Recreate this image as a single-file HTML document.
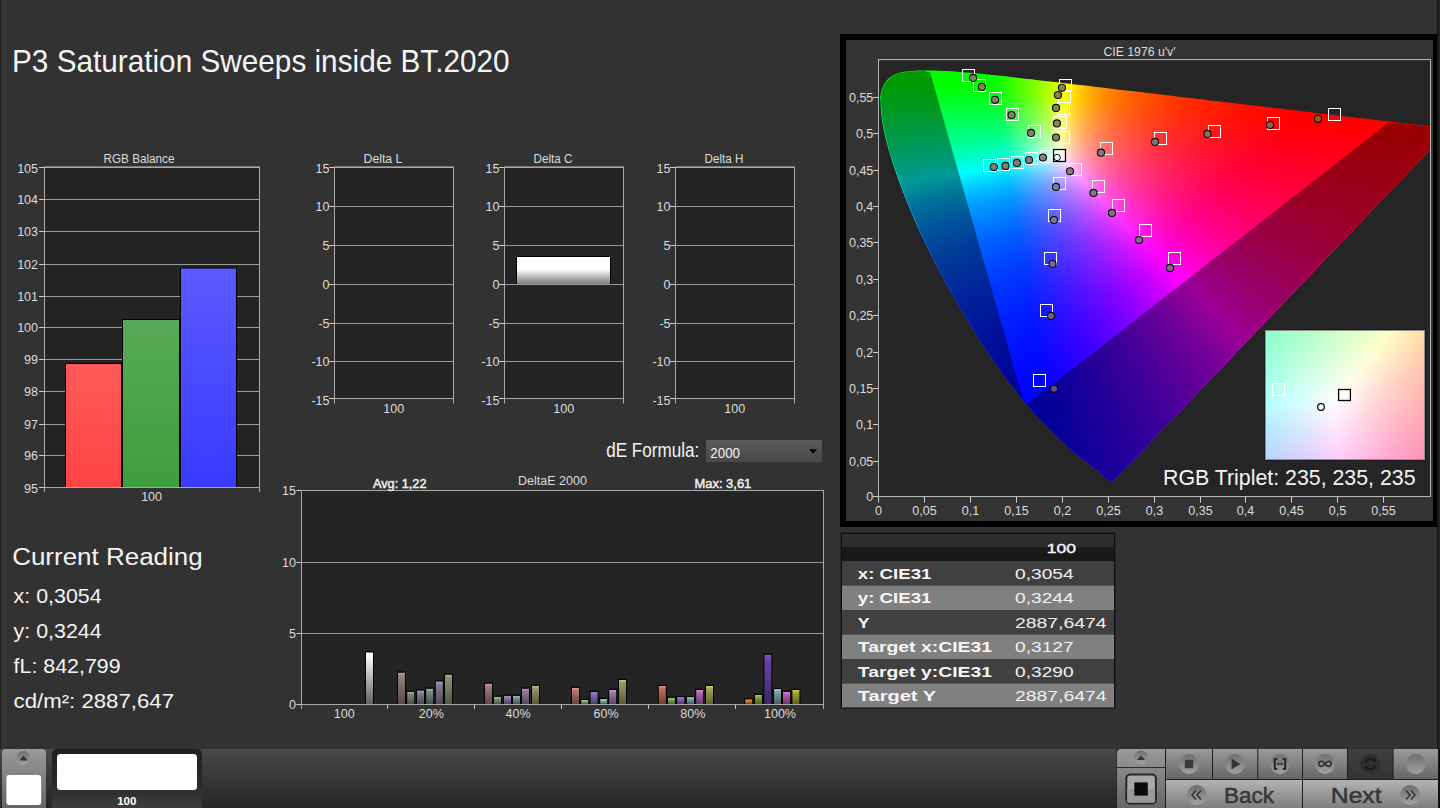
<!DOCTYPE html><html><head><meta charset="utf-8"><title>P3 Saturation Sweeps inside BT.2020</title><style>
html,body{margin:0;padding:0}
body{width:1440px;height:808px;background:#323232;overflow:hidden;position:relative;font-family:"Liberation Sans",sans-serif}
div{position:absolute}
#ov{position:absolute;left:0;top:0}
text{font-family:"Liberation Sans",sans-serif}
#fill{left:878px;top:59px;width:553px;height:437px;overflow:hidden}
#fill i,#ins i{display:block}
#ins{left:1265px;top:330px;width:158px;height:128px;border:1px solid #8c9090;overflow:hidden;box-shadow:0 0 0 1px #1c1c1c}
</style></head><body>
<div style="left:0;top:0;width:7px;height:749px;background:linear-gradient(90deg,#1e1e1e 0,#1e1e1e 1px,#363636 1px,#353535 6px,#2f2f2f 7px)"></div>
<div style="left:0;top:749px;width:1440px;height:59px;background:linear-gradient(#494949,#3a3a3a 40%,#262626)"></div>
<div style="left:840px;top:34px;width:587px;height:481px;border:6px solid #000;background:#343434"></div>
<div style="left:1437px;top:0;width:3px;height:749px;background:linear-gradient(90deg,#101010,#282828)"></div>
<div style="left:878px;top:59px;width:553px;height:437px;background:linear-gradient(#303030 0,#2e2e2e 2px,#252525 3.5px)"></div>
<div id="fill" style="clip-path:polygon(233.9px 423.7px,231.9px 422.2px,230.2px 420.8px,228.3px 419.3px,226.1px 417.5px,225px 416.5px,223.8px 415.5px,222.5px 414.4px,221.2px 413.3px,219.8px 412.1px,218.4px 410.9px,216.8px 409.6px,215.2px 408.3px,213.5px 406.9px,211.6px 405.4px,209.6px 403.8px,207.4px 402.2px,205.2px 400.4px,202.9px 398.6px,200.5px 396.8px,198px 394.9px,195.5px 392.8px,192.8px 390.7px,190.3px 388.5px,187.8px 386.1px,185.1px 383.6px,182.3px 381px,179.4px 378.2px,176.5px 375.2px,173.4px 372.1px,170.1px 368.8px,166.6px 365.3px,162.9px 361.4px,159px 357.2px,154.8px 352.5px,150.3px 347.2px,145.5px 341.5px,140.4px 335.3px,135.2px 328.7px,130px 321.8px,124.6px 314.4px,119px 306.6px,113.3px 298.4px,107.5px 289.8px,101.6px 280.8px,95.6px 271.4px,89.6px 261.6px,83.7px 251.7px,77.8px 241.5px,71.9px 231.2px,66.1px 220.8px,60.4px 210.3px,54.9px 199.7px,49.5px 189.2px,44.5px 178.7px,39.8px 168.4px,35.4px 158.4px,31.3px 148.5px,27.4px 139px,23.8px 129.7px,20.5px 120.8px,17.5px 112.3px,14.8px 104.2px,12.4px 96.6px,10.3px 89.5px,8.5px 82.8px,6.9px 76.5px,5.6px 70.6px,4.6px 65.1px,3.8px 60px,3.2px 55.3px,2.8px 51px,2.6px 47px,2.7px 43.2px,2px 39.7px,2.4px 36.5px,3px 33.5px,3.8px 30.7px,4.8px 28.2px,5.9px 25.8px,7.1px 23.7px,8.5px 21.8px,10.1px 20.1px,11.8px 18.6px,13.6px 17.3px,15.5px 16.2px,17.5px 15.2px,19.6px 14.4px,21.7px 13.7px,24px 13.2px,26.3px 12.8px,28.7px 12.4px,31.1px 12.2px,33.6px 11.9px,36.1px 11.8px,38.7px 11.7px,41.3px 11.6px,43.9px 11.5px,46.5px 11.5px,49.1px 11.5px,51.7px 11.5px,54.3px 11.5px,56.9px 11.6px,59.6px 11.7px,62.3px 11.8px,65px 11.9px,67.7px 12px,70.5px 12.1px,73.3px 12.3px,76.1px 12.5px,79px 12.7px,82px 12.9px,85px 13.2px,88px 13.4px,91.1px 13.7px,94.3px 14px,97.5px 14.3px,100.7px 14.6px,104px 14.9px,107.4px 15.2px,110.9px 15.6px,114.4px 16px,118px 16.3px,121.7px 16.7px,125.4px 17.1px,129.2px 17.6px,133.1px 18px,137.1px 18.4px,141.2px 18.9px,145.3px 19.4px,149.5px 19.9px,153.8px 20.3px,158.3px 20.9px,162.7px 21.4px,167.3px 21.9px,172px 22.4px,176.8px 23px,181.6px 23.6px,186.6px 24.2px,191.7px 24.7px,196.8px 25.4px,202.1px 26px,207.4px 26.6px,212.9px 27.3px,218.4px 27.9px,224px 28.6px,229.8px 29.3px,235.6px 30px,241.5px 30.7px,247.5px 31.4px,253.6px 32.1px,259.8px 32.8px,266px 33.6px,272.4px 34.3px,278.8px 35.1px,285.2px 35.8px,291.8px 36.6px,298.4px 37.4px,305px 38.2px,311.7px 39px,318.5px 39.8px,325.2px 40.6px,332px 41.4px,338.7px 42.2px,345.3px 42.9px,351.8px 43.7px,358.3px 44.5px,364.8px 45.3px,371.2px 46px,377.7px 46.8px,384.1px 47.5px,390.4px 48.3px,396.7px 49px,402.9px 49.8px,408.9px 50.5px,414.7px 51.2px,420.4px 51.8px,426px 52.5px,431.5px 53.1px,436.8px 53.8px,442px 54.4px,447.1px 55px,452px 55.6px,456.8px 56.1px,461.4px 56.7px,465.9px 57.2px,470.2px 57.7px,474.4px 58.2px,478.4px 58.7px,482.3px 59.2px,486px 59.6px,489.7px 60px,493.2px 60.4px,496.5px 60.8px,499.8px 61.2px,502.9px 61.6px,505.9px 61.9px,508.9px 62.3px,511.7px 62.6px,514.5px 63px,517.3px 63.3px,519.9px 63.6px,522.5px 63.9px,525px 64.2px,527.4px 64.5px,529.7px 64.8px,531.9px 65px,534.1px 65.3px,536.1px 65.5px,538.1px 65.8px,540px 66px,541.9px 66.2px,543.6px 66.4px,545.3px 66.6px,546.8px 66.8px,549.6px 67.1px,552.2px 67.4px,554.5px 67.7px,556.6px 67.9px,558.5px 68.2px,560.2px 68.4px,562.3px 68.6px,563.9px 68.8px,565.7px 69px,567.3px 69.2px,569px 69.4px,570.7px 69.6px,572.2px 69.8px)">
<i style="height:10px"></i>
<i style="height:1px;background:linear-gradient(90deg,#0f0 44px,#0f0 54px)"></i>
<i style="height:1px;background:linear-gradient(90deg,#0f0 26px,#0f0 79px)"></i>
<i style="height:1px;background:linear-gradient(90deg,#0f0 20px,#0f0 91px)"></i>
<i style="height:1px;background:linear-gradient(90deg,#0f0 17px,#0f0 102px)"></i>
<i style="height:1px;background:linear-gradient(90deg,#0f0 14px,#0f0 112px)"></i>
<i style="height:1px;background:linear-gradient(90deg,#0f0 12px,#0f0 113px,#17ff00 122px)"></i>
<i style="height:1px;background:linear-gradient(90deg,#0f0 11px,#0f0 113px,#30ff00 131px)"></i>
<i style="height:1px;background:linear-gradient(90deg,#0f0 9px,#01ff00 114px,#4bff00 140px)"></i>
<i style="height:1px;background:linear-gradient(90deg,#0f0 8px,#01ff00 114px,#4bff00 140px,#67ff00 149px)"></i>
<i style="height:1px;background:linear-gradient(90deg,#00ff01 7px,#0f0 114px,#4aff00 140px,#85ff00 158px)"></i>
<i style="height:1px;background:linear-gradient(90deg,#00ff03 6px,#0f0 41px,#0f0 114px,#4aff00 140px,#97ff00 163px,#a2ff00 166px)"></i>
<i style="height:1px;background:linear-gradient(90deg,#00ff05 6px,#0f0 48px,#0f0 114px,#4f0 138px,#90ff00 161px,#c4ff00 175px)"></i>
<i style="height:1px;background:linear-gradient(90deg,#00ff07 5px,#0f0 57px,#0f0 114px,#3dff00 136px,#89ff00 159px,#d4ff00 179px,#e9ff00 184px)"></i>
<i style="height:1px;background:linear-gradient(90deg,#00ff09 4px,#0f0 67px,#01ff00 115px,#49ff00 140px,#93ff00 162px,#e1ff00 182px,#ff0 189px,#fff200 192px)"></i>
<i style="height:1px;background:linear-gradient(90deg,#00ff0b 4px,#0f0 77px,#01ff00 115px,#49ff00 140px,#93ff00 162px,#e1ff00 182px,#ff0 189px,#ffd400 200px,#ffd100 201px)"></i>
<i style="height:1px;background:linear-gradient(90deg,#00ff0d 3px,#0f0 87px,#01ff00 115px,#49ff00 140px,#93ff00 162px,#e1ff00 182px,#fffe00 189px,#ffd400 200px,#ffb900 209px)"></i>
<i style="height:1px;background:linear-gradient(90deg,#00ff0f 3px,#0f0 97px,#0f0 115px,#49ff00 140px,#93ff00 162px,#e2ff00 182px,#fffe00 189px,#ffd400 200px,#ffae00 213px,#ffa400 217px)"></i>
<i style="height:1px;background:linear-gradient(90deg,#0f1 2px,#0f0 107px,#0f0 115px,#45ff00 139px,#90ff00 161px,#deff00 181px,#fffd00 189px,#ffd300 200px,#ffad00 213px,#ff9000 226px)"></i>
<i style="height:1px;background:linear-gradient(90deg,#00ff13 2px,#0f0 115px,#3fff00 137px,#8f0 159px,#d6ff00 179px,#fdff00 188px,#fff900 190px,#ffcf00 201px,#ffa800 215px,#ff8500 232px,#ff8100 234px)"></i>
<i style="height:1px;background:linear-gradient(90deg,#00ff15 1px,#00ff01 115px,#35ff00 134px,#81ff00 157px,#ceff00 177px,#fdff00 188px,#fff400 191px,#fc0 202px,#ffa500 216px,#ff8100 234px,#ff7300 243px)"></i>
<i style="height:1px;background:linear-gradient(90deg,#00ff16 1px,#01ff03 116px,#4bff00 141px,#97ff00 163px,#e7ff00 183px,#fdff00 188px,#ffe000 196px,#ffb900 208px,#ff9500 223px,#ff7200 243px,#ff6700 251px)"></i>
<i style="height:1px;background:linear-gradient(90deg,#00ff18 1px,#01ff06 116px,#4bff00 141px,#97ff00 163px,#e3ff00 182px,#feff00 188px,#ffce00 201px,#ffa700 215px,#ff8300 232px,#ff6300 254px,#ff5c00 260px)"></i>
<i style="height:1px;background:linear-gradient(90deg,#00ff1a 1px,#00ff08 116px,#4bff02 141px,#97ff00 163px,#e4ff00 182px,#feff00 188px,#ffd100 200px,#ffab00 213px,#ff8700 230px,#ff6500 252px,#ff5300 268px)"></i>
<i style="height:1px;background:linear-gradient(90deg,#00ff1c 0px,#00ff0b 116px,#47ff05 140px,#93ff00 162px,#e0ff00 181px,#ff0 188px,#ffd400 199px,#ffad00 212px,#ff8a00 228px,#ff6900 249px,#ff4a00 277px)"></i>
<i style="height:1px;background:linear-gradient(90deg,#00ff1e 0px,#00ff0d 116px,#41ff08 138px,#8cff03 160px,#dbff00 180px,#ff0 188px,#ffd700 198px,#ffaf00 211px,#ff8b00 227px,#ff6900 248px,#ff4b00 275px,#ff4200 285px)"></i>
<i style="height:1px;background:linear-gradient(90deg,#00ff20 0px,#00ff10 116px,#3aff0c 136px,#84ff06 158px,#d3ff01 178px,#ff0 188px,#ffd600 198px,#ffaf00 211px,#ff8b00 227px,#ff6900 248px,#ff4b00 275px,#ff3c00 293px)"></i>
<i style="height:1px;background:linear-gradient(90deg,#0f2 0px,#01ff12 117px,#4aff0d 141px,#93ff08 162px,#e0ff03 181px,#fffe01 188px,#ffd600 198px,#ffae00 211px,#ff8b00 227px,#ff6900 248px,#ff4a00 275px,#ff3500 302px)"></i>
<i style="height:1px;background:linear-gradient(90deg,#00ff24 0px,#01ff15 117px,#49ff10 141px,#93ff0b 162px,#e1ff06 181px,#fffe04 188px,#ffd601 198px,#ffae00 211px,#ff8a00 227px,#ff6800 248px,#ff4a00 275px,#ff2f00 310px)"></i>
<i style="height:1px;background:linear-gradient(90deg,#00ff26 0px,#01ff17 117px,#49ff13 141px,#93ff0e 162px,#e1ff0a 181px,#fffd08 188px,#ffd504 198px,#ffae00 211px,#ff8a00 227px,#ff6800 248px,#ff4a00 275px,#ff2e00 312px,#ff2a00 319px)"></i>
<i style="height:1px;background:linear-gradient(90deg,#00ff28 0px,#00ff1a 117px,#49ff16 141px,#93ff11 162px,#e1ff0d 181px,#fcff0b 187px,#fff80a 189px,#ffd106 199px,#ffaa03 212px,#ff8700 228px,#f60 249px,#ff4700 277px,#ff2c00 315px,#ff2500 327px)"></i>
<i style="height:1px;background:linear-gradient(90deg,#00ff2a 0px,#00ff1c 117px,#42ff19 139px,#8cff15 160px,#d9ff11 179px,#fdff0f 187px,#fff40d 190px,#ffca09 201px,#ffa504 214px,#ff8100 231px,#ff6100 253px,#ff4300 282px,#ff2700 322px,#ff2000 336px)"></i>
<i style="height:1px;background:linear-gradient(90deg,#00ff2c 0px,#00ff1f 117px,#3bff1c 137px,#88ff18 159px,#d5ff14 178px,#fdff12 187px,#ffe70f 193px,#ffc00a 204px,#ff9b06 218px,#ff7801 236px,#ff5800 260px,#ff3a00 292px,#ff2000 336px,#ff1c00 344px)"></i>
<i style="height:1px;background:linear-gradient(90deg,#00ff2e 0px,#0f2 117px,#32ff1f 134px,#7dff1c 156px,#c8ff18 175px,#feff15 187px,#ffd00f 199px,#ffa90a 212px,#ff8605 228px,#ff6501 249px,#ff4600 277px,#ff2b00 315px,#ff1800 352px)"></i>
<i style="height:1px;background:linear-gradient(90deg,#00ff2f 0px,#01ff24 118px,#4bff21 142px,#97ff1d 163px,#e7ff1a 182px,#feff19 187px,#ffcf12 199px,#ffa90c 212px,#ff8607 228px,#ff6403 249px,#ff4600 277px,#ff2a00 315px,#ff1400 361px)"></i>
<i style="height:1px;background:linear-gradient(90deg,#00ff31 0px,#01ff27 118px,#4bff24 142px,#97ff20 163px,#e7ff1d 182px,#ffff1c 187px,#ffd215 198px,#ffab0f 211px,#ff870a 227px,#ff6505 248px,#ff4700 275px,#ff2c00 312px,#ff1300 364px,#f10 369px)"></i>
<i style="height:1px;background:linear-gradient(90deg,#0f3 0px,#00ff2a 118px,#47ff27 141px,#93ff24 162px,#e3ff21 181px,#ffff1f 187px,#ffd619 197px,#ffb013 209px,#ff8c0d 224px,#ff6b07 244px,#ff4c02 270px,#ff3000 305px,#ff1700 354px,#ff0e00 378px)"></i>
<i style="height:1px;background:linear-gradient(90deg,#00ff35 0px,#00ff2c 118px,#47ff2a 141px,#93ff27 162px,#e3ff24 181px,#ffff23 187px,#ffd51c 197px,#ffaf15 209px,#ff8c0f 224px,#ff6a09 244px,#ff4b04 270px,#ff2f00 305px,#ff1600 354px,#ff0b00 386px)"></i>
<i style="height:1px;background:linear-gradient(90deg,#00ff37 0px,#00ff2f 118px,#40ff2d 139px,#8cff2a 160px,#dbff28 179px,#fffe26 187px,#ffd51f 197px,#ffaf18 209px,#ff8c11 224px,#ff6a0b 244px,#ff4b05 270px,#ff2f00 305px,#ff1600 354px,#ff0800 395px)"></i>
<i style="height:1px;background:linear-gradient(90deg,#00ff39 0px,#00ff32 118px,#36ff30 136px,#80ff2e 157px,#ceff2c 176px,#fffe2a 187px,#ffd422 197px,#ffae1a 209px,#ff8b13 224px,#ff690d 244px,#ff4b07 270px,#ff2f01 305px,#ff1600 354px,#ff0500 403px)"></i>
<i style="height:1px;background:linear-gradient(90deg,#00ff3b 0px,#01ff35 119px,#4aff33 142px,#93ff31 162px,#e0ff2e 180px,#fffd2d 187px,#ffd425 197px,#ffae1d 209px,#ff8b16 224px,#ff690f 244px,#ff4a08 270px,#ff2e03 305px,#ff1500 354px,#ff0300 412px)"></i>
<i style="height:1px;background:linear-gradient(90deg,#00ff3d 0px,#01ff37 119px,#4aff36 142px,#93ff34 162px,#e0ff32 180px,#fcff31 186px,#fff830 188px,#ffd027 198px,#ffa81e 211px,#ff8417 227px,#ff630f 248px,#ff4509 275px,#ff2a03 312px,#f10 364px,#f00 420px)"></i>
<i style="height:1px;background:linear-gradient(90deg,#00ff40 0px,#00ff3a 119px,#49ff39 142px,#93ff37 162px,#e0ff35 180px,#fdff35 186px,#fff833 188px,#ffcf2a 198px,#ffaa21 210px,#ff8619 226px,#ff6512 246px,#ff470b 273px,#ff2b04 310px,#ff1200 362px,#f00 424px,#f00 429px)"></i>
<i style="height:1px;background:linear-gradient(90deg,#00ff42 0px,#00ff3d 119px,#49ff3c 142px,#93ff3a 162px,#e1ff39 180px,#fdff38 186px,#ffea33 191px,#ffc12a 202px,#ff9b20 216px,#ff7918 233px,#ff5810 256px,#ff3b0a 286px,#ff2003 328px,#ff0a00 385px,#f00 426px,#f00 437px)"></i>
<i style="height:1px;background:linear-gradient(90deg,#0f4 0px,#00ff40 119px,#42ff3f 140px,#8bff3e 160px,#d8ff3d 178px,#feff3c 186px,#ffce30 198px,#ffa927 210px,#ff851e 226px,#ff6415 246px,#ff460e 273px,#ff2a07 310px,#ff1101 362px,#f00 422px,#f00 446px)"></i>
<i style="height:1px;background:linear-gradient(90deg,#00ff46 1px,#00ff43 119px,#38ff42 137px,#83ff41 158px,#cfff40 176px,#feff40 186px,#ffd134 197px,#ffab2a 209px,#ff8821 224px,#ff6718 244px,#ff4810 270px,#ff2d09 305px,#ff1402 355px,#f00 420px,#f00 454px)"></i>
<i style="height:1px;background:linear-gradient(90deg,#00ff48 1px,#00ff46 119px,#2aff45 133px,#74ff45 154px,#c2ff44 173px,#ff4 186px,#ffd438 196px,#ffae2d 208px,#ff8a24 223px,#ff691b 242px,#ff4b12 267px,#ff2f0b 301px,#ff1604 349px,#ff0100 414px,#f00 462px)"></i>
<i style="height:1px;background:linear-gradient(90deg,#00ff4a 1px,#01ff49 120px,#48ff48 142px,#93ff48 162px,#e2ff47 180px,#ffff47 186px,#ffd43b 196px,#ffad30 208px,#ff8926 223px,#ff691d 242px,#ff4a14 267px,#ff2f0c 301px,#ff1605 349px,#f00 416px,#f00 471px)"></i>
<i style="height:1px;background:linear-gradient(90deg,#00ff4c 1px,#01ff4c 120px,#48ff4b 142px,#93ff4b 162px,#e2ff4b 180px,#ffff4b 186px,#ffd73f 195px,#ffb034 207px,#ff8b29 222px,#ff6a1f 241px,#ff4b16 266px,#ff2f0e 300px,#ff1606 348px,#f00 415px,#f00 479px)"></i>
<i style="height:1px;background:linear-gradient(90deg,#00ff4e 1px,#00ff4e 120px,#48ff4f 142px,#93ff4f 162px,#e3ff4f 180px,#fffe4f 186px,#ffd743 195px,#ffaf36 207px,#ff8b2b 222px,#ff6921 241px,#ff4b17 266px,#ff2f0f 300px,#ff1507 348px,#f00 415px,#f00 488px)"></i>
<i style="height:1px;background:linear-gradient(90deg,#00ff50 1px,#00ff51 120px,#44ff52 141px,#8fff52 161px,#deff53 179px,#fffe52 186px,#ffd646 195px,#ffaf39 207px,#ff8a2d 222px,#ff6923 241px,#ff4a19 266px,#ff2e10 300px,#ff1508 348px,#ff0001 414px,#f00 496px)"></i>
<i style="height:1px;background:linear-gradient(90deg,#00ff52 1px,#00ff54 120px,#3dff55 139px,#87ff56 159px,#d5ff56 177px,#fcff57 185px,#fffd56 186px,#ffd649 195px,#ffae3c 207px,#ff8a30 222px,#ff6825 241px,#ff4a1b 266px,#ff2e11 300px,#ff1509 348px,#ff0002 413px,#f00 505px)"></i>
<i style="height:1px;background:linear-gradient(90deg,#00ff54 1px,#00ff57 120px,#2fff58 135px,#77ff59 155px,#c3ff5a 173px,#fcff5a 185px,#fff858 187px,#ffce4a 197px,#ffa83d 209px,#ff8531 224px,#ff6425 244px,#ff461b 270px,#ff2a11 306px,#ff1109 356px,#ff0003 414px,#f00 493px,#f00 513px)"></i>
<i style="height:1px;background:linear-gradient(90deg,#00ff57 2px,#01ff5b 121px,#4aff5c 143px,#93ff5d 162px,#dfff5e 179px,#fdff5e 185px,#fff75c 187px,#ffcd4d 197px,#ffa83f 209px,#ff8533 224px,#ff6327 244px,#ff451c 270px,#ff2913 306px,#ff110a 356px,#ff0004 414px,#f00 495px,#f00 522px)"></i>
<i style="height:1px;background:linear-gradient(90deg,#00ff59 2px,#01ff5e 121px,#4aff5f 143px,#93ff60 162px,#e0ff62 179px,#fdff62 185px,#ffee5c 189px,#ffc64d 199px,#ff9f3f 212px,#ff7c32 228px,#ff5c27 249px,#ff3e1c 277px,#ff2412 315px,#ff0c09 369px,#ff0004 415px,#f00 502px,#f00 530px)"></i>
<i style="height:1px;background:linear-gradient(90deg,#00ff5b 2px,#00ff61 121px,#4aff62 143px,#93ff64 162px,#e0ff66 179px,#feff66 185px,#ffd055 196px,#ffa946 208px,#ff8638 223px,#ff652c 242px,#ff4620 268px,#ff2b16 303px,#ff120d 352px,#ff0005 411px,#f00 509px,#f00 538px)"></i>
<i style="height:1px;background:linear-gradient(90deg,#00ff5d 2px,#00ff64 121px,#46ff66 142px,#8fff68 161px,#dbff6a 178px,#feff6a 185px,#ffd058 196px,#ffa949 208px,#ff853b 223px,#ff652e 242px,#ff4622 268px,#ff2a17 303px,#ff120e 352px,#ff0006 410px,#f00 518px,#f00 547px)"></i>
<i style="height:1px;background:linear-gradient(90deg,#00ff5f 2px,#00ff67 121px,#3eff69 140px,#8bff6b 160px,#d7ff6d 177px,#feff6e 185px,#ffd35d 195px,#ffab4d 207px,#ff873e 222px,#ff6631 241px,#ff4724 266px,#ff2c19 300px,#ff130f 348px,#ff0007 409px,#f00 527px,#f00 553px)"></i>
<i style="height:1px;background:linear-gradient(90deg,#00ff62 2px,#00ff6a 121px,#33ff6c 137px,#7fff6e 157px,#ceff71 175px,#ffff73 185px,#ffd662 194px,#ffb052 205px,#ff8d43 219px,#ff6b35 237px,#ff4c28 261px,#ff301d 293px,#ff1712 338px,#ff0009 404px,#f00 533px,#f00 553px)"></i>
<i style="height:1px;background:linear-gradient(90deg,#00ff64 3px,#01ff6d 122px,#49ff70 143px,#93ff73 162px,#e1ff76 179px,#ffff76 185px,#ffd665 194px,#ffb055 205px,#ff8c45 219px,#ff6b37 237px,#ff4c2a 261px,#ff301e 293px,#ff1713 338px,#ff0009 404px,#f00 541px,#f00 553px)"></i>
<i style="height:1px;background:linear-gradient(90deg,#0f6 3px,#01ff71 122px,#48ff73 143px,#93ff76 162px,#e1ff7a 179px,#fffe7a 185px,#ffd568 194px,#ffaf58 205px,#ff8c48 219px,#ff6a39 237px,#ff4b2c 261px,#ff301f 293px,#ff1614 338px,#ff000a 403px,#f00 548px,#f00 553px)"></i>
<i style="height:1px;background:linear-gradient(90deg,#00ff68 3px,#00ff74 122px,#48ff77 143px,#93ff7a 162px,#e2ff7e 179px,#fffe7e 185px,#ffd56c 194px,#ffaf5b 205px,#ff8b4a 219px,#ff6a3b 237px,#ff4b2d 261px,#ff2f21 293px,#ff1615 338px,#ff000b 403px,#f00 553px)"></i>
<i style="height:1px;background:linear-gradient(90deg,#00ff6b 3px,#0f7 122px,#48ff7a 143px,#93ff7e 162px,#e2ff82 179px,#fcff83 184px,#fffd82 185px,#ffd46f 194px,#ffae5e 205px,#ff8b4d 219px,#ff693d 237px,#ff4b2f 261px,#ff2f22 293px,#ff1616 338px,#ff000c 402px,#f00 553px)"></i>
<i style="height:1px;background:linear-gradient(90deg,#00ff6d 3px,#00ff7a 122px,#40ff7e 141px,#8bff82 160px,#d9ff86 177px,#fcff87 184px,#fff884 186px,#ffd071 195px,#ffab5f 206px,#ff884e 220px,#ff673f 238px,#ff4930 262px,#ff2d23 295px,#ff1417 341px,#ff000d 402px,#ff0001 553px)"></i>
<i style="height:1px;background:linear-gradient(90deg,#00ff6f 4px,#00ff7e 122px,#39ff81 139px,#82ff85 158px,#cfff89 175px,#fdff8c 184px,#fff788 186px,#ffcf74 195px,#ffaa62 206px,#ff8751 220px,#ff6741 238px,#ff4932 262px,#ff2d24 295px,#ff1418 341px,#ff000e 401px,#ff0001 553px)"></i>
<i style="height:1px;background:linear-gradient(90deg,#00ff71 4px,#00ff81 122px,#23ff83 133px,#6eff88 153px,#bcff8c 171px,#fdff90 184px,#ffed87 188px,#ffc472 198px,#ff9f5f 210px,#ff7d4e 225px,#ff5c3e 245px,#ff3e2f 272px,#ff2321 309px,#ff0c15 361px,#ff000e 404px,#ff0002 553px)"></i>
<i style="height:1px;background:linear-gradient(90deg,#00ff74 4px,#00ff84 122px,#08ff85 125px,#52ff8a 146px,#9cff8e 164px,#e9ff93 180px,#feff94 184px,#ffce7b 195px,#ffa968 206px,#ff8656 220px,#ff6645 238px,#ff4835 262px,#ff2c27 295px,#ff131a 341px,#ff0010 400px,#ff0002 553px)"></i>
<i style="height:1px;background:linear-gradient(90deg,#00ff76 4px,#00ff87 120px,#01ff88 123px,#4aff8d 144px,#93ff92 162px,#dfff97 178px,#feff99 184px,#ffd281 194px,#ffac6d 205px,#ff8859 219px,#ff6748 237px,#ff4838 261px,#ff2d29 293px,#ff141c 338px,#f01 398px,#ff0003 548px,#ff0003 553px)"></i>
<i style="height:1px;background:linear-gradient(90deg,#00ff78 4px,#00ff8a 117px,#00ff8b 123px,#4aff90 144px,#93ff96 162px,#dfff9b 178px,#feff9d 184px,#ffd184 194px,#ffab70 205px,#ff885c 219px,#ff674a 237px,#ff4839 261px,#ff2d2a 293px,#ff141d 338px,#ff0012 397px,#ff0004 544px,#ff0003 553px)"></i>
<i style="height:1px;background:linear-gradient(90deg,#00ff7b 5px,#00ff8d 115px,#00ff8f 123px,#42ff94 142px,#8bff99 160px,#daff9f 177px,#ffffa2 184px,#ffd58a 193px,#ffae74 204px,#ff8960 218px,#ff684d 236px,#ff493c 260px,#ff2d2c 292px,#ff141e 337px,#ff0013 396px,#ff0005 540px,#ff0004 553px)"></i>
<i style="height:1px;background:linear-gradient(90deg,#00ff7d 5px,#00ff8f 112px,#00ff92 123px,#3aff97 140px,#86ff9d 159px,#d6ffa3 176px,#ffffa6 184px,#ffd48e 193px,#ffad77 204px,#ff8962 218px,#ff674f 236px,#ff483d 260px,#ff2d2e 292px,#ff141f 337px,#ff0014 396px,#ff0005 538px,#ff0004 553px)"></i>
<i style="height:1px;background:linear-gradient(90deg,#00ff80 5px,#00ff92 110px,#00ff96 123px,#2fff9a 137px,#79ffa0 156px,#c7ffa6 173px,#fffeaa 184px,#ffd491 193px,#ffad7a 204px,#ff8865 218px,#ff6751 236px,#ff483f 260px,#ff2c2f 292px,#ff1320 337px,#ff0015 395px,#ff0006 534px,#ff0005 553px)"></i>
<i style="height:1px;background:linear-gradient(90deg,#00ff82 5px,#00ff95 108px,#01ff99 124px,#49ffa0 144px,#94ffa6 162px,#e1ffad 178px,#fffeae 184px,#ffd395 193px,#ffac7e 204px,#ff8868 218px,#ff6653 236px,#ff4741 260px,#ff2c30 292px,#ff1321 337px,#ff0016 394px,#ff0007 530px,#ff0005 553px)"></i>
<i style="height:1px;background:linear-gradient(90deg,#00ff84 6px,#00ff98 107px,#01ff9d 124px,#48ffa3 144px,#94ffaa 162px,#e1ffb1 178px,#fbffb4 183px,#fffdb3 184px,#ffd399 193px,#ffac81 204px,#ff876a 218px,#ff6656 236px,#ff4743 260px,#ff2b32 292px,#ff1323 337px,#ff0017 393px,#ff0008 526px,#ff0006 553px)"></i>
<i style="height:1px;background:linear-gradient(90deg,#00ff87 6px,#00ff9b 105px,#00ffa0 124px,#48ffa7 144px,#94ffae 162px,#e1ffb6 178px,#fcffb8 183px,#fffdb7 184px,#ffd29c 193px,#ffab84 204px,#ff876d 218px,#ff6558 236px,#ff4644 260px,#ff2b33 292px,#ff1224 337px,#ff0018 393px,#ff0009 525px,#ff0007 553px)"></i>
<i style="height:1px;background:linear-gradient(90deg,#00ff89 6px,#00ff9e 103px,#00ffa4 124px,#48ffab 144px,#94ffb3 162px,#e2ffba 178px,#fcffbd 183px,#fff7b8 185px,#ffcd9d 194px,#ffa885 205px,#ff846e 219px,#ff6359 237px,#ff4546 261px,#ff2934 294px,#ff1124 340px,#ff0019 392px,#ff0009 521px,#ff0007 553px)"></i>
<i style="height:1px;background:linear-gradient(90deg,#00ff8c 6px,#00ffa0 101px,#00ffa8 124px,#40ffae 142px,#8affb6 160px,#d7ffbe 176px,#fdffc2 183px,#fff1b9 186px,#ffc99e 195px,#ffa486 206px,#ff816f 220px,#ff615a 238px,#ff4447 262px,#ff2835 295px,#ff1025 342px,#ff001a 392px,#ff000a 519px,#ff0008 553px)"></i>
<i style="height:1px;background:linear-gradient(90deg,#00ff8e 7px,#00ffa3 100px,#00ffab 124px,#34ffb1 139px,#7dffb9 157px,#c8ffc1 173px,#fdffc7 183px,#ffcca5 194px,#ffa68b 205px,#ff8373 219px,#ff625d 237px,#ff4449 261px,#ff2937 294px,#ff1026 340px,#ff001b 391px,#ff000b 516px,#ff0008 553px)"></i>
<i style="height:1px;background:linear-gradient(90deg,#00ff91 7px,#00ffa6 98px,#00ffaf 124px,#0fffb1 129px,#57ffb9 148px,#a2ffc1 165px,#edffca 180px,#feffcb 183px,#ffd0ab 193px,#ffa990 204px,#ff8577 218px,#ff6361 236px,#ff454c 260px,#ff2a39 292px,#ff1128 337px,#ff001c 389px,#ff000c 511px,#ff0009 553px)"></i>
<i style="height:1px;background:linear-gradient(90deg,#00ff93 7px,#00ffa9 97px,#01ffb3 125px,#4bffbc 145px,#94ffc4 162px,#e3ffcd 178px,#feffd0 183px,#ffd4b2 192px,#ffaf98 202px,#ff8b7f 215px,#ff6967 232px,#ff4b52 254px,#ff2f3e 284px,#ff162d 326px,#ff001d 386px,#ff000d 504px,#ff0009 553px)"></i>
<i style="height:1px;background:linear-gradient(90deg,#00ff96 8px,#00ffac 96px,#01ffb7 125px,#4affc0 145px,#94ffc8 162px,#e3ffd2 178px,#ffffd5 183px,#ffd7b9 191px,#ffb19e 201px,#ff8d83 214px,#ff6a6b 231px,#ff4c55 253px,#ff2f40 283px,#ff162e 325px,#ff001e 385px,#ff000e 501px,#ff000a 553px)"></i>
<i style="height:1px;background:linear-gradient(90deg,#00ff98 8px,#00ffaf 95px,#0fb 125px,#4affc4 145px,#94ffcd 162px,#deffd6 177px,#ffffda 183px,#ffd7bd 191px,#ffb1a1 201px,#ff8c86 214px,#ff6a6d 231px,#ff4b57 253px,#ff2f42 283px,#ff162f 325px,#ff0020 384px,#ff000f 498px,#ff000a 553px)"></i>
<i style="height:1px;background:linear-gradient(90deg,#00ff9b 8px,#00ffb2 93px,#00ffbe 125px,#42ffc7 143px,#8affd0 160px,#d9ffda 176px,#fffede 183px,#ffd6c1 191px,#ffb0a4 201px,#ff8c89 214px,#ff696f 231px,#ff4b58 253px,#ff2e43 283px,#ff1531 325px,#ff0021 383px,#ff0010 495px,#ff000b 553px)"></i>
<i style="height:1px;background:linear-gradient(90deg,#00ff9d 8px,#00ffb5 92px,#00ffc2 125px,#36ffc9 140px,#81ffd3 158px,#cfffde 174px,#fffde3 183px,#ffd6c5 191px,#ffb0a8 201px,#ff8b8c 214px,#ff6972 231px,#ff4a5a 253px,#ff2e45 283px,#ff1532 325px,#f02 382px,#f01 492px,#ff000b 553px)"></i>
<i style="height:1px;background:linear-gradient(90deg,#00ffa0 9px,#00ffb8 91px,#00ffc6 125px,#1bffca 133px,#62ffd4 151px,#acffde 167px,#fbffe9 182px,#fffde8 183px,#ffd5c9 191px,#ffafab 201px,#ff8b8f 214px,#ff6874 231px,#ff4a5c 253px,#ff2e46 283px,#ff1533 325px,#ff0023 382px,#ff0012 491px,#ff000c 553px)"></i>
<i style="height:1px;background:linear-gradient(90deg,#00ffa3 9px,#0fb 90px,#01ffca 126px,#49ffd5 145px,#94ffdf 162px,#e0ffea 177px,#fcffee 182px,#fffcec 183px,#ffd5cd 191px,#ffafaf 201px,#ff8a92 214px,#ff6a78 230px,#ff4a5f 252px,#ff2f49 281px,#ff1635 322px,#ff0024 380px,#ff0013 486px,#ff000c 553px)"></i>
<i style="height:1px;background:linear-gradient(90deg,#00ffa5 9px,#00ffbe 89px,#01ffce 126px,#49ffd9 145px,#94ffe4 162px,#e0ffef 177px,#fcfff3 182px,#fff6ec 184px,#ffd0cd 192px,#ffabaf 202px,#ff8793 215px,#ff6678 232px,#ff485f 254px,#ff2c49 284px,#ff1335 326px,#ff0025 380px,#ff0014 485px,#ff000d 552px)"></i>
<i style="height:1px;background:linear-gradient(90deg,#00ffa8 10px,#00ffc1 88px,#00ffd2 126px,#48ffdd 145px,#94ffe8 162px,#e1fff4 177px,#fdfff8 182px,#fff0ed 185px,#ffc7ca 194px,#ffa1ab 205px,#ff7e8e 219px,#ff5d73 237px,#ff405b 261px,#ff2545 294px,#ff0d31 341px,#ff0025 382px,#ff0014 487px,#ff000e 551px)"></i>
<i style="height:1px;background:linear-gradient(90deg,#00ffab 10px,#00ffc4 87px,#00ffd6 126px,#44ffe1 144px,#8fffec 161px,#dbfff8 176px,#fdfffe 182px,#ffcfd5 192px,#ffaab6 202px,#ff8698 215px,#ff657c 232px,#ff4763 254px,#ff2b4c 284px,#ff1337 326px,#ff0027 379px,#ff0016 481px,#ff000e 550px)"></i>
<i style="height:1px;background:linear-gradient(90deg,#00ffad 10px,#00ffc7 86px,#00ffda 126px,#3bffe4 142px,#85fff0 159px,#d1fffc 174px,#f5fcff 181px,#fffaff 183px,#ffd2dd 191px,#ffacbc 201px,#ff889d 214px,#ff6881 230px,#ff4967 252px,#ff2d50 281px,#ff143a 322px,#ff0029 377px,#ff0017 477px,#ff000f 549px)"></i>
<i style="height:1px;background:linear-gradient(90deg,#00ffb0 10px,#00ffca 85px,#00ffde 126px,#27ffe5 137px,#73fff1 155px,#c1fffe 171px,#fff4ff 184px,#ffcddd 192px,#ffa8bd 202px,#ff859e 215px,#ff6481 232px,#ff4667 254px,#ff2b4f 284px,#ff1239 327px,#ff0029 378px,#ff0017 477px,#ff0010 548px)"></i>
<i style="height:1px;background:linear-gradient(90deg,#00ffb3 11px,#00ffcd 85px,#00ffe2 126px,#09ffe4 129px,#50fff0 147px,#99fffd 163px,#b9fcff 170px,#fef 185px,#ffc5da 194px,#ff9fb8 205px,#ff7b99 219px,#ff5b7c 237px,#ff3e62 261px,#ff234b 294px,#ff0b35 341px,#ff002a 379px,#ff0018 478px,#ff0010 547px)"></i>
<i style="height:1px;background:linear-gradient(90deg,#00ffb6 11px,#00ffd0 84px,#01ffe7 127px,#4bfff4 146px,#93fdff 162px,#ffe8ff 186px,#ffc0da 195px,#ff9bb9 206px,#ff799a 220px,#ff597d 238px,#ff3c63 262px,#ff224b 295px,#ff0a36 343px,#ff002b 378px,#ff0019 475px,#f01 546px)"></i>
<i style="height:1px;background:linear-gradient(90deg,#00ffb8 11px,#00ffd3 83px,#00ffeb 127px,#4bfff9 146px,#76feff 156px,#ffe3ff 187px,#ffbcdb 196px,#ff98ba 207px,#ff769b 221px,#ff567d 240px,#ff3962 265px,#ff1f4a 300px,#ff0734 350px,#ff002c 378px,#ff001a 474px,#ff0012 545px)"></i>
<i style="height:1px;background:linear-gradient(90deg,#0fb 12px,#00ffd7 83px,#00ffef 127px,#46fffc 145px,#68fbff 153px,#ede1ff 184px,#fdf 188px,#ffb7db 197px,#ff92b8 209px,#ff7098 224px,#ff507a 244px,#ff335f 271px,#ff1a47 308px,#ff0332 362px,#ff002c 381px,#ff001a 478px,#ff0012 544px)"></i>
<i style="height:1px;background:linear-gradient(90deg,#00ffbe 12px,#00ffda 82px,#00fff4 127px,#41feff 144px,#c6e4ff 176px,#ffd8fe 189px,#ffb3db 198px,#ff8eb8 210px,#ff6d99 225px,#ff4e7b 245px,#ff3260 272px,#ff1847 310px,#ff0232 365px,#ff0023 425px,#ff0013 543px)"></i>
<i style="height:1px;background:linear-gradient(90deg,#00ffc1 12px,#0fd 81px,#00fff8 127px,#2cfdff 139px,#b2e3ff 172px,#ffd3fe 190px,#ffacd8 200px,#ff89b6 212px,#ff6796 228px,#ff4978 249px,#ff2d5e 277px,#ff1445 317px,#ff0031 370px,#ff001e 459px,#ff0013 543px)"></i>
<i style="height:1px;background:linear-gradient(90deg,#00ffc4 13px,#00ffe0 81px,#00fffc 127px,#0dffff 131px,#92e4ff 165px,#ffcefe 191px,#ffa8d9 201px,#ff83b5 214px,#ff6395 230px,#ff4577 252px,#ff295b 282px,#ff1143 324px,#ff0032 371px,#ff001f 460px,#ff0014 542px)"></i>
<i style="height:1px;background:linear-gradient(90deg,#00ffc7 13px,#00ffe3 80px,#00feff 127px,#05fcff 129px,#87e2ff 163px,#ffc9fe 192px,#ffa4d9 202px,#ff80b5 215px,#ff6094 232px,#ff4277 254px,#ff275c 284px,#ff0f43 327px,#f03 371px,#ff001f 459px,#ff0015 541px)"></i>
<i style="height:1px;background:linear-gradient(90deg,#00ffca 13px,#00ffe6 79px,#00feff 121px,#01f9ff 128px,#85deff 163px,#ffc4fe 193px,#ffa0d9 203px,#ff7eb6 216px,#ff5d95 233px,#ff4177 255px,#ff265c 285px,#ff0e44 328px,#ff0034 370px,#ff0021 456px,#ff0015 540px)"></i>
<i style="height:1px;background:linear-gradient(90deg,#00ffcd 14px,#00ffea 79px,#00feff 115px,#00f4ff 128px,#82daff 163px,#ffbffe 194px,#ff9cda 204px,#ff7bb7 217px,#ff5b96 234px,#ff3f78 256px,#ff255d 286px,#ff0d45 329px,#ff0035 370px,#ff0021 456px,#ff0016 539px)"></i>
<i style="height:1px;background:linear-gradient(90deg,#00ffd0 14px,#00ffed 78px,#00feff 109px,#00f0ff 128px,#79d7ff 161px,#ffbbfe 195px,#ff96d7 206px,#ff74b3 220px,#ff5592 238px,#ff3874 262px,#ff1f59 294px,#ff0941 340px,#ff0036 369px,#ff0023 453px,#ff0017 538px)"></i>
<i style="height:1px;background:linear-gradient(90deg,#00ffd2 14px,#00fff0 77px,#00fdff 104px,#00ecff 128px,#67d7ff 157px,#ecbbff 191px,#ffb6fe 196px,#ff92d7 207px,#ff71b3 221px,#ff5393 239px,#ff3775 263px,#ff1e59 296px,#ff0741 342px,#ff0037 369px,#ff0024 452px,#ff0018 537px)"></i>
<i style="height:1px;background:linear-gradient(90deg,#00ffd6 15px,#00fff3 77px,#00fdff 98px,#00e9ff 128px,#2fdeff 142px,#b5c3ff 178px,#ffb2fe 197px,#ff8fd8 208px,#ff6fb4 222px,#ff5193 240px,#ff3675 264px,#ff1d5a 297px,#ff0742 343px,#ff0039 368px,#ff0025 450px,#ff0018 536px)"></i>
<i style="height:1px;background:linear-gradient(90deg,#00ffd9 15px,#00fff7 77px,#00feff 92px,#01e4ff 129px,#85c9ff 166px,#ffaefe 198px,#ff8cd8 209px,#ff6cb5 223px,#ff4f94 241px,#ff3476 265px,#ff1c5b 298px,#ff0643 344px,#ff003a 367px,#ff0026 448px,#ff0019 535px)"></i>
<i style="height:1px;background:linear-gradient(90deg,#00ffdb 15px,#00fffa 76px,#00fdff 87px,#01e1ff 129px,#86c4ff 167px,#ffaafe 199px,#ff89d8 210px,#ff6ab5 224px,#ff4d95 242px,#f37 266px,#ff1b5c 299px,#ff0543 346px,#ff003b 367px,#ff0027 447px,#ff001a 534px)"></i>
<i style="height:1px;background:linear-gradient(90deg,#00ffdf 16px,#00fffe 76px,#0df 129px,#84c1ff 167px,#ffa5fe 200px,#ff85d9 211px,#ff67b6 225px,#ff4b96 243px,#ff3178 267px,#ff1a5c 300px,#ff0444 347px,#ff003c 366px,#ff0028 445px,#ff001a 533px)"></i>
<i style="height:1px;background:linear-gradient(90deg,#00ffe2 16px,#00feff 74px,#00daff 129px,#7ebeff 166px,#fda3ff 200px,#ff9efa 202px,#ff7ed3 214px,#ff60b0 229px,#ff4590 248px,#ff2b73 274px,#ff1458 309px,#ff0040 359px,#ff002b 434px,#ff001b 532px)"></i>
<i style="height:1px;background:linear-gradient(90deg,#00ffe5 16px,#00fdff 69px,#00d6ff 129px,#6ebeff 162px,#f5a1ff 199px,#ff9efd 202px,#ff7dd6 214px,#ff5fb3 229px,#ff4493 248px,#ff2b74 274px,#ff1459 309px,#ff0041 359px,#ff002c 433px,#ff001c 531px)"></i>
<i style="height:1px;background:linear-gradient(90deg,#00ffe8 17px,#00feff 63px,#00d3ff 129px,#5bbfff 157px,#e3a2ff 195px,#ff9afd 203px,#ff7ad7 215px,#ff5db3 230px,#ff4293 249px,#ff2975 275px,#ff135a 310px,#ff0042 359px,#ff002d 432px,#ff001c 530px)"></i>
<i style="height:1px;background:linear-gradient(90deg,#00ffeb 17px,#00feff 57px,#01cfff 130px,#86b2ff 170px,#fd98ff 203px,#ff8ef3 207px,#ff6fcd 220px,#ff53aa 236px,#ff398b 257px,#ff226e 285px,#ff0c53 324px,#ff0043 360px,#ff002d 433px,#ff001d 529px)"></i>
<i style="height:1px;background:linear-gradient(90deg,#00ffef 18px,#00feff 51px,#01ccff 130px,#84afff 170px,#fd95ff 204px,#ff88ef 209px,#ff6aca 222px,#ff4ea7 239px,#ff3588 261px,#ff1e6b 290px,#ff0951 331px,#f04 360px,#ff002e 433px,#ff001e 528px)"></i>
<i style="height:1px;background:linear-gradient(90deg,#00fff2 18px,#00fdff 46px,#00c9ff 130px,#85abff 171px,#fd91ff 205px,#ff7fe9 212px,#ff62c4 226px,#ff47a1 244px,#ff2f83 267px,#ff1966 298px,#ff054d 341px,#ff0045 360px,#ff002f 432px,#ff001f 527px)"></i>
<i style="height:1px;background:linear-gradient(90deg,#00fff5 18px,#00fdff 40px,#00c6ff 130px,#83a9ff 171px,#fd8eff 206px,#ff71db 218px,#ff56b8 233px,#ff3c96 253px,#ff2578 279px,#ff0f5c 315px,#ff0048 356px,#ff0031 426px,#ff001f 526px)"></i>
<i style="height:1px;background:linear-gradient(90deg,#00fff8 19px,#00feff 34px,#00c3ff 130px,#78a8ff 168px,#fd8aff 207px,#ff68d3 222px,#ff4eb0 238px,#ff3590 259px,#ff1f72 287px,#ff0a58 325px,#ff0049 356px,#ff0032 425px,#ff0020 525px)"></i>
<i style="height:1px;background:linear-gradient(90deg,#00fffc 19px,#00fdff 30px,#00c0ff 130px,#66a9ff 163px,#ec8bff 203px,#fe87ff 208px,#ff66d3 223px,#ff4cb1 239px,#ff3491 260px,#ff1e73 288px,#ff0a58 326px,#ff004a 356px,#f03 425px,#ff0021 524px)"></i>
<i style="height:1px;background:linear-gradient(90deg,#0ff 19px,#00c7ff 115px,#01bcff 131px,#879eff 174px,#fe84ff 209px,#ff63d4 224px,#ff4ab1 240px,#ff3291 261px,#ff1c74 289px,#ff0859 328px,#ff004b 355px,#ff0035 423px,#f02 523px)"></i>
<i style="height:1px;background:linear-gradient(90deg,#00fcff 20px,#00bfff 123px,#01baff 131px,#859cff 174px,#fe81ff 210px,#ff61d4 225px,#ff47b0 242px,#ff2f8f 264px,#ff1a72 293px,#ff0657 333px,#ff004c 355px,#ff0036 422px,#f02 522px)"></i>
<i style="height:1px;background:linear-gradient(90deg,#00f9ff 20px,#0bf 124px,#01b7ff 131px,#8399ff 174px,#fe7eff 211px,#ff5fd4 226px,#ff45b1 243px,#ff2e90 265px,#ff1973 294px,#ff0558 334px,#ff004e 354px,#ff0037 420px,#ff0023 521px)"></i>
<i style="height:1px;background:linear-gradient(90deg,#00f5ff 21px,#00b8ff 125px,#00b4ff 131px,#8596ff 175px,#fe7bff 212px,#ff5cd5 227px,#ff43b1 244px,#ff2c91 266px,#ff1873 295px,#ff0558 335px,#ff004f 354px,#ff0038 420px,#ff0024 520px)"></i>
<i style="height:1px;background:linear-gradient(90deg,#00f2ff 21px,#00b5ff 126px,#00b2ff 131px,#7d95ff 173px,#fe78ff 213px,#ff5ad5 228px,#ff42b2 245px,#ff2b91 267px,#ff1774 296px,#ff0459 336px,#ff0050 354px,#ff0039 419px,#ff0025 518px,#ff0024 520px)"></i>
<i style="height:1px;background:linear-gradient(90deg,#00efff 21px,#00b2ff 127px,#00afff 131px,#6f95ff 169px,#f477ff 211px,#fe75ff 214px,#ff58d5 229px,#ff40b2 246px,#ff2a92 268px,#ff1574 298px,#ff0259 339px,#ff004f 358px,#ff0038 425px,#ff0025 519px)"></i>
<i style="height:1px;background:linear-gradient(90deg,#00ecff 22px,#00aeff 128px,#02acff 132px,#858eff 177px,#fe72ff 215px,#ff56d5 230px,#ff3eb3 247px,#ff2893 269px,#ff1474 299px,#ff0259 340px,#ff0042 395px,#ff002c 480px,#ff0026 518px)"></i>
<i style="height:1px;background:linear-gradient(90deg,#00e9ff 22px,#00abff 129px,#01a9ff 132px,#878bff 178px,#fe6fff 216px,#ff53d6 231px,#ff3cb3 248px,#ff2692 271px,#ff1374 301px,#ff0159 342px,#ff0041 400px,#ff002c 487px,#ff0027 517px)"></i>
<i style="height:1px;background:linear-gradient(90deg,#00e6ff 22px,#00a8ff 130px,#01a7ff 132px,#8588ff 178px,#fe6cff 217px,#ff51d6 232px,#ff3ab2 250px,#ff2491 273px,#ff1173 304px,#ff0059 345px,#ff0041 404px,#ff002c 492px,#ff0027 516px)"></i>
<i style="height:1px;background:linear-gradient(90deg,#00e3ff 23px,#00a5ff 131px,#03a4ff 133px,#8985ff 180px,#fe6aff 218px,#ff4fd6 233px,#ff38b3 251px,#ff2392 274px,#ff1074 305px,#ff005a 345px,#ff0042 404px,#ff002c 491px,#ff0028 515px)"></i>
<i style="height:1px;background:linear-gradient(90deg,#00e1ff 23px,#00a2ff 132px,#8184ff 178px,#ff67ff 219px,#ff4dd7 234px,#ff37b3 252px,#ff2293 275px,#ff0f75 306px,#ff005c 344px,#ff0043 402px,#ff002e 488px,#ff0029 514px)"></i>
<i style="height:1px;background:linear-gradient(90deg,#0df 24px,#00a0ff 132px,#7485ff 174px,#fb65ff 219px,#ff63fc 221px,#ff4bd7 235px,#ff35b4 253px,#ff2193 276px,#ff0e75 307px,#ff005d 343px,#ff0045 400px,#ff002f 484px,#ff002a 513px)"></i>
<i style="height:1px;background:linear-gradient(90deg,#00dbff 24px,#009eff 132px,#6785ff 170px,#ef65ff 216px,#ff62ff 221px,#ff49d7 236px,#ff33b4 254px,#ff1f93 278px,#ff0c75 309px,#ff005f 343px,#ff0046 400px,#ff0030 484px,#ff002b 512px)"></i>
<i style="height:1px;background:linear-gradient(90deg,#00d8ff 24px,#019bff 133px,#857cff 181px,#ff5fff 222px,#ff47d7 237px,#ff32b4 255px,#ff1e93 279px,#ff0b75 311px,#ff0060 342px,#ff0047 398px,#ff0031 480px,#ff002b 511px)"></i>
<i style="height:1px;background:linear-gradient(90deg,#00d5ff 25px,#0199ff 133px,#8679ff 182px,#ff5dff 223px,#ff45d8 238px,#ff30b5 256px,#ff1c94 280px,#ff0a75 312px,#ff0062 341px,#ff0049 396px,#f03 477px,#ff002c 510px)"></i>
<i style="height:1px;background:linear-gradient(90deg,#00d3ff 25px,#0097ff 133px,#8478ff 182px,#ff5aff 224px,#ff43d8 239px,#ff2eb4 258px,#ff1b93 282px,#ff0975 314px,#ff0064 340px,#ff004b 394px,#ff0034 473px,#ff002d 509px)"></i>
<i style="height:1px;background:linear-gradient(90deg,#00d0ff 26px,#0095ff 133px,#8276ff 182px,#ff58ff 225px,#ff41d8 240px,#ff2cb4 259px,#ff1a94 283px,#ff0876 315px,#f06 339px,#ff004c 393px,#ff0035 471px,#ff002e 508px)"></i>
<i style="height:1px;background:linear-gradient(90deg,#00ceff 26px,#0093ff 133px,#7976ff 179px,#ff56ff 226px,#ff40d8 241px,#ff2bb5 260px,#ff1894 284px,#ff0776 316px,#ff0067 338px,#ff004e 391px,#ff0037 468px,#ff002f 507px)"></i>
<i style="height:1px;background:linear-gradient(90deg,#00cbff 26px,#0091ff 133px,#6f76ff 176px,#f656ff 224px,#ff53ff 227px,#ff3ed9 242px,#ff2ab5 261px,#ff1794 286px,#ff0676 319px,#ff0069 338px,#ff004f 391px,#ff0038 467px,#ff002f 506px)"></i>
<i style="height:1px;background:linear-gradient(90deg,#00c9ff 27px,#018eff 134px,#866eff 185px,#ff51ff 228px,#ff3cd9 243px,#ff28b5 262px,#ff1694 287px,#ff0576 320px,#ff006a 337px,#ff0050 389px,#ff0039 464px,#ff0030 505px)"></i>
<i style="height:1px;background:linear-gradient(90deg,#00c6ff 27px,#018cff 134px,#876cff 186px,#ff4fff 229px,#ff3ad9 244px,#ff27b6 263px,#ff1595 288px,#ff0477 321px,#ff006c 337px,#ff0052 388px,#ff003a 462px,#ff0031 504px)"></i>
<i style="height:1px;background:linear-gradient(90deg,#00c4ff 28px,#008aff 134px,#856aff 186px,#ff4dff 230px,#ff38d9 245px,#ff26b6 264px,#ff1495 289px,#ff0377 322px,#ff006c 338px,#ff0052 390px,#ff003a 464px,#ff0032 503px)"></i>
<i style="height:1px;background:linear-gradient(90deg,#00c2ff 28px,#08f 134px,#8469ff 186px,#ff4bff 231px,#ff36d7 247px,#ff23b4 267px,#ff1193 293px,#ff0175 327px,#ff005a 374px,#ff0042 440px,#f03 502px)"></i>
<i style="height:1px;background:linear-gradient(90deg,#00bfff 28px,#0087ff 134px,#7d68ff 184px,#ff49ff 232px,#ff34d8 248px,#ff21b4 268px,#ff1093 294px,#ff0075 328px,#ff005a 375px,#ff0042 442px,#ff0034 501px)"></i>
<i style="height:1px;background:linear-gradient(90deg,#00bdff 29px,#0085ff 134px,#7469ff 181px,#fa48ff 231px,#ff46fe 233px,#ff32d8 249px,#ff20b5 269px,#ff0f94 295px,#ff0075 330px,#ff005a 377px,#ff0042 444px,#ff0034 500px)"></i>
<i style="height:1px;background:linear-gradient(90deg,#0bf 29px,#0183ff 135px,#8762ff 189px,#ff44fe 234px,#ff31d8 250px,#ff1fb5 270px,#ff0e94 296px,#f07 330px,#ff005b 377px,#ff0043 444px,#ff0035 499px)"></i>
<i style="height:1px;background:linear-gradient(90deg,#00b8ff 30px,#0181ff 135px,#8560ff 189px,#ff42fe 235px,#ff2fd8 251px,#ff1db5 271px,#ff0d95 297px,#ff0079 329px,#ff005d 375px,#ff0045 440px,#ff0036 498px)"></i>
<i style="height:1px;background:linear-gradient(90deg,#00b6ff 30px,#017fff 135px,#865eff 190px,#ff40fe 236px,#ff2ed9 252px,#ff1bb4 273px,#ff0b93 300px,#ff007b 328px,#ff005f 374px,#ff0046 439px,#ff0037 497px)"></i>
<i style="height:1px;background:linear-gradient(90deg,#00b4ff 30px,#007dff 135px,#855dff 190px,#ff3efe 237px,#ff2cd9 253px,#ff1ab5 274px,#ff0a94 301px,#ff007d 327px,#ff0061 372px,#ff0048 435px,#ff0038 496px)"></i>
<i style="height:1px;background:linear-gradient(90deg,#00b2ff 31px,#007cff 135px,#815cff 189px,#ff3dfe 238px,#ff2ad7 255px,#ff18b4 276px,#ff0993 303px,#ff007e 327px,#ff0062 372px,#ff0049 435px,#ff0039 496px)"></i>
<i style="height:1px;background:linear-gradient(90deg,#00b0ff 31px,#007aff 135px,#785cff 186px,#ff3bfe 239px,#ff28d7 256px,#ff17b4 277px,#ff0894 304px,#ff0080 326px,#ff0064 370px,#ff004a 432px,#ff0039 495px)"></i>
<i style="height:1px;background:linear-gradient(90deg,#00aeff 32px,#0178ff 136px,#8557ff 192px,#ff39fe 240px,#ff27d7 257px,#ff16b4 278px,#ff0693 306px,#ff0082 325px,#f06 369px,#ff004c 430px,#ff003a 494px)"></i>
<i style="height:1px;background:linear-gradient(90deg,#00acff 32px,#0176ff 136px,#8655ff 193px,#ff37fe 241px,#ff25d8 258px,#ff14b3 280px,#ff0593 308px,#ff0084 325px,#ff0067 368px,#ff004d 428px,#ff003b 493px)"></i>
<i style="height:1px;background:linear-gradient(90deg,#0af 33px,#0175ff 136px,#8554ff 193px,#ff35fe 242px,#ff24d8 259px,#ff13b4 281px,#ff0493 309px,#ff0086 324px,#ff0069 367px,#ff004f 426px,#ff003c 492px)"></i>
<i style="height:1px;background:linear-gradient(90deg,#00a8ff 33px,#0073ff 136px,#8652ff 194px,#ff33fe 243px,#ff22d8 260px,#ff12b4 282px,#ff0394 310px,#ff0087 324px,#ff006a 366px,#ff0050 425px,#ff003d 491px)"></i>
<i style="height:1px;background:linear-gradient(90deg,#00a6ff 33px,#0072ff 136px,#8451ff 194px,#ff32fe 244px,#ff21d8 261px,#ff11b5 283px,#ff0394 311px,#f08 325px,#ff006a 368px,#ff0050 427px,#ff003e 490px)"></i>
<i style="height:1px;background:linear-gradient(90deg,#00a4ff 34px,#0070ff 136px,#7c51ff 191px,#ff30fe 245px,#ff1fd7 263px,#ff0fb4 285px,#ff0193 314px,#ff0075 352px,#ff005a 404px,#ff0042 478px,#ff003f 489px)"></i>
<i style="height:1px;background:linear-gradient(90deg,#00a2ff 34px,#016eff 137px,#864dff 196px,#ff2efe 246px,#ff1dd7 264px,#ff0eb3 287px,#ff0092 316px,#ff0074 355px,#ff0059 408px,#ff0041 484px,#ff0040 488px)"></i>
<i style="height:1px;background:linear-gradient(90deg,#00a0ff 35px,#016dff 137px,#874bff 197px,#ff2dfe 247px,#ff1cd7 265px,#ff0db3 288px,#ff0093 317px,#ff0075 356px,#ff005a 409px,#ff0041 485px,#ff0041 487px)"></i>
<i style="height:1px;background:linear-gradient(90deg,#009eff 35px,#016cff 137px,#864aff 197px,#ff2bfe 248px,#ff1bd7 266px,#ff0cb3 289px,#ff0095 316px,#f07 354px,#ff005c 406px,#ff0043 480px,#ff0042 486px)"></i>
<i style="height:1px;background:linear-gradient(90deg,#009cff 36px,#006aff 137px,#8449ff 197px,#ff29fe 249px,#ff1ad7 267px,#ff0bb4 290px,#ff0097 315px,#ff0079 353px,#ff005d 405px,#f04 478px,#ff0043 485px)"></i>
<i style="height:1px;background:linear-gradient(90deg,#009bff 36px,#0069ff 137px,#8547ff 198px,#ff28fe 250px,#ff18d8 268px,#ff0ab4 291px,#f09 315px,#ff007a 353px,#ff005f 404px,#ff0046 476px,#f04 484px)"></i>
<i style="height:1px;background:linear-gradient(90deg,#09f 36px,#0068ff 137px,#7f47ff 196px,#ff26fd 251px,#ff17d8 269px,#ff09b5 292px,#ff009b 314px,#ff007d 351px,#ff0061 401px,#ff0048 471px,#ff0045 483px)"></i>
<i style="height:1px;background:linear-gradient(90deg,#0097ff 37px,#0266ff 138px,#8744ff 200px,#fe26ff 251px,#ff14d5 272px,#ff06b1 296px,#ff009e 313px,#ff007e 350px,#ff0062 400px,#ff0049 470px,#ff0046 482px)"></i>
<i style="height:1px;background:linear-gradient(90deg,#0095ff 37px,#0164ff 138px,#8643ff 200px,#fe24ff 252px,#ff13d5 273px,#ff05b1 297px,#ff009f 313px,#ff0080 349px,#ff0064 398px,#ff004b 466px,#ff0047 481px)"></i>
<i style="height:1px;background:linear-gradient(90deg,#0093ff 38px,#0163ff 138px,#8641ff 201px,#fe23ff 253px,#ff12d5 274px,#ff04b2 298px,#ff00a2 312px,#ff0082 348px,#f06 396px,#ff004c 463px,#ff0047 480px)"></i>
<i style="height:1px;background:linear-gradient(90deg,#0092ff 38px,#0162ff 138px,#8540ff 201px,#fe21ff 254px,#ff11d5 275px,#ff03b2 299px,#ff00a2 313px,#ff0083 349px,#f06 398px,#ff004c 466px,#ff0048 479px)"></i>
<i style="height:1px;background:linear-gradient(90deg,#0090ff 39px,#0061ff 138px,#863eff 202px,#fe20ff 255px,#ff10d5 276px,#ff03b2 300px,#ff00a3 314px,#ff0083 350px,#f06 399px,#ff004d 467px,#ff0049 478px)"></i>
<i style="height:1px;background:linear-gradient(90deg,#008fff 39px,#005fff 138px,#833eff 201px,#fe1eff 256px,#ff0fd6 277px,#ff01b2 302px,#ff0091 334px,#ff0073 377px,#ff0058 436px,#ff004a 477px)"></i>
<i style="height:1px;background:linear-gradient(90deg,#008dff 40px,#005eff 138px,#7b3fff 198px,#ff1dff 257px,#ff0ed6 278px,#ff00b2 303px,#ff0091 335px,#ff0073 378px,#ff0058 437px,#ff004b 476px)"></i>
<i style="height:1px;background:linear-gradient(90deg,#008bff 40px,#015dff 139px,#863aff 204px,#ff1bff 258px,#ff0cd6 279px,#ff00b2 304px,#ff0092 336px,#ff0074 379px,#ff0059 438px,#ff004c 475px)"></i>
<i style="height:1px;background:linear-gradient(90deg,#0089ff 41px,#015bff 139px,#8539ff 204px,#ff1aff 259px,#ff0bd6 280px,#ff00b3 305px,#ff0092 337px,#ff0074 380px,#ff0059 439px,#ff004d 474px)"></i>
<i style="height:1px;background:linear-gradient(90deg,#08f 41px,#015aff 139px,#8638ff 205px,#ff19ff 260px,#ff0ad6 281px,#ff00b5 304px,#ff0094 336px,#ff0076 378px,#ff005b 436px,#ff004e 473px)"></i>
<i style="height:1px;background:linear-gradient(90deg,#0087ff 41px,#0059ff 139px,#8537ff 205px,#ff17ff 261px,#ff09d7 282px,#ff00b8 303px,#ff0097 335px,#ff0078 377px,#ff005d 434px,#ff004f 473px)"></i>
<i style="height:1px;background:linear-gradient(90deg,#0085ff 42px,#0058ff 139px,#8635ff 206px,#ff16ff 262px,#ff08d7 283px,#f0b 302px,#ff009a 333px,#ff007b 374px,#ff005f 430px,#ff0050 472px)"></i>
<i style="height:1px;background:linear-gradient(90deg,#0084ff 42px,#0057ff 139px,#7e36ff 203px,#ff15ff 263px,#ff08d9 283px,#ff00be 301px,#ff009c 332px,#ff007d 372px,#ff0061 427px,#ff0051 471px)"></i>
<i style="height:1px;background:linear-gradient(90deg,#0082ff 43px,#0155ff 140px,#8733ff 208px,#ff14ff 264px,#ff07d9 284px,#ff00c1 300px,#ff009f 330px,#ff0080 370px,#ff0063 424px,#ff0052 470px)"></i>
<i style="height:1px;background:linear-gradient(90deg,#0081ff 43px,#0154ff 140px,#8632ff 208px,#ff12ff 265px,#ff06d9 285px,#ff00c3 300px,#ff00a0 330px,#ff0081 369px,#ff0065 422px,#ff0053 469px)"></i>
<i style="height:1px;background:linear-gradient(90deg,#007fff 44px,#0153ff 140px,#8730ff 209px,#f1f 266px,#ff05d9 286px,#ff00c6 299px,#ff00a3 329px,#ff0083 368px,#ff0067 420px,#ff0054 468px)"></i>
<i style="height:1px;background:linear-gradient(90deg,#007eff 44px,#0052ff 140px,#852fff 209px,#ff10ff 267px,#ff03d8 288px,#ff00c6 300px,#ff00a3 330px,#ff0084 369px,#ff0067 421px,#ff0056 467px)"></i>
<i style="height:1px;background:linear-gradient(90deg,#007cff 45px,#0051ff 140px,#842fff 209px,#ff0fff 268px,#ff02d8 289px,#ff00bf 306px,#ff009e 337px,#ff007f 378px,#ff0062 434px,#ff0057 466px)"></i>
<i style="height:1px;background:linear-gradient(90deg,#007bff 45px,#0050ff 140px,#812eff 208px,#ff0dff 269px,#ff01d8 290px,#ff00b5 316px,#ff0094 350px,#ff0076 395px,#ff005a 457px,#ff0058 465px)"></i>
<i style="height:1px;background:linear-gradient(90deg,#0079ff 46px,#014fff 141px,#862cff 211px,#ff0cff 270px,#ff00d8 291px,#ff00b4 318px,#ff0093 353px,#ff0075 399px,#ff0059 462px,#ff0059 464px)"></i>
<i style="height:1px;background:linear-gradient(90deg,#0078ff 46px,#014eff 141px,#872bff 212px,#ff0bff 271px,#ff00d8 292px,#ff00b4 319px,#ff0093 354px,#ff0075 400px,#ff005a 463px)"></i>
<i style="height:1px;background:linear-gradient(90deg,#0076ff 47px,#014dff 141px,#852aff 212px,#ff0aff 272px,#ff00da 292px,#ff00b6 319px,#ff0094 354px,#ff0076 400px,#ff005b 462px)"></i>
<i style="height:1px;background:linear-gradient(90deg,#0075ff 47px,#004cff 141px,#8628ff 213px,#ff09ff 273px,#f0d 291px,#ff00ba 317px,#ff0098 351px,#ff0079 396px,#ff005e 457px,#ff005c 461px)"></i>
<i style="height:1px;background:linear-gradient(90deg,#0073ff 48px,#004bff 141px,#8528ff 213px,#ff07ff 274px,#ff00df 291px,#f0b 317px,#f09 351px,#ff007a 396px,#ff005e 457px,#ff005d 460px)"></i>
<i style="height:1px;background:linear-gradient(90deg,#0072ff 48px,#004aff 141px,#8427ff 213px,#ff06ff 275px,#ff00e3 290px,#ff00be 316px,#ff009c 349px,#ff007d 393px,#ff0061 452px,#ff005e 459px)"></i>
<i style="height:1px;background:linear-gradient(90deg,#0071ff 49px,#0148ff 142px,#8725ff 215px,#ff05fe 276px,#ff00e6 289px,#ff00c2 314px,#ff00a0 346px,#ff0081 388px,#ff0065 445px,#ff0060 458px)"></i>
<i style="height:1px;background:linear-gradient(90deg,#0070ff 49px,#0147ff 142px,#8524ff 215px,#ff04fe 277px,#ff00e8 289px,#ff00c3 314px,#ff00a1 346px,#ff0082 388px,#ff0065 445px,#ff0061 457px)"></i>
<i style="height:1px;background:linear-gradient(90deg,#006eff 50px,#0146ff 142px,#8623ff 216px,#ff03fe 278px,#ff00ea 289px,#ff00c5 314px,#ff00a2 346px,#ff0083 388px,#f06 445px,#ff0062 456px)"></i>
<i style="height:1px;background:linear-gradient(90deg,#006dff 50px,#0146ff 142px,#8522ff 216px,#ff02fe 279px,#ff00e3 294px,#ff00bf 320px,#ff009d 354px,#ff007e 398px,#ff0063 455px)"></i>
<i style="height:1px;background:linear-gradient(90deg,#006cff 51px,#0045ff 142px,#8621ff 217px,#ff01fe 280px,#ff00d8 302px,#ff00b5 330px,#ff0093 367px,#ff0075 416px,#ff0064 454px)"></i>
<i style="height:1px;background:linear-gradient(90deg,#006bff 51px,#04f 142px,#8521ff 217px,#ff00fe 281px,#ff00d8 303px,#ff00b5 331px,#ff0094 368px,#ff0076 417px,#ff0065 453px)"></i>
<i style="height:1px;background:linear-gradient(90deg,#0069ff 52px,#0142ff 143px,#871fff 219px,#ff00fe 282px,#ff00d7 305px,#ff00b3 334px,#ff0093 371px,#ff0074 421px,#ff0067 452px)"></i>
<i style="height:1px;background:linear-gradient(90deg,#0068ff 52px,#0142ff 143px,#861eff 219px,#fe00ff 282px,#ff00d3 309px,#ff00af 339px,#ff008f 378px,#ff0071 430px,#ff0068 451px)"></i>
<i style="height:1px;background:linear-gradient(90deg,#0067ff 53px,#0141ff 143px,#871dff 220px,#fa00ff 281px,#ff00fc 285px,#ff00d6 308px,#ff00b3 337px,#ff0092 375px,#ff0074 426px,#ff0069 450px)"></i>
<i style="height:1px;background:linear-gradient(90deg,#06f 53px,#0140ff 143px,#861cff 220px,#f600ff 280px,#ff00fe 285px,#ff00d8 308px,#ff00b4 337px,#ff0093 375px,#ff0075 425px,#ff006a 449px)"></i>
<i style="height:1px;background:linear-gradient(90deg,#0064ff 54px,#003fff 143px,#851cff 220px,#f200ff 279px,#ff00fe 286px,#ff00d8 309px,#ff00b4 338px,#ff0093 376px,#ff0075 426px,#ff006b 449px)"></i>
<i style="height:1px;background:linear-gradient(90deg,#0063ff 54px,#003eff 143px,#851bff 221px,#ef00ff 278px,#ff00fe 287px,#ff00d8 310px,#ff00b4 340px,#ff0093 378px,#ff0075 429px,#ff006c 448px)"></i>
<i style="height:1px;background:linear-gradient(90deg,#0062ff 55px,#013dff 144px,#861aff 222px,#eb00ff 277px,#ff00fe 288px,#ff00d8 311px,#ff00b4 341px,#ff0093 380px,#ff0075 431px,#ff006d 447px)"></i>
<i style="height:1px;background:linear-gradient(90deg,#0061ff 55px,#013cff 144px,#8719ff 223px,#e700ff 276px,#ff00fe 289px,#ff00d7 313px,#ff00b3 343px,#ff0092 382px,#ff0074 434px,#ff006f 446px)"></i>
<i style="height:1px;background:linear-gradient(90deg,#0060ff 56px,#013bff 144px,#8618ff 223px,#e400ff 275px,#ff00fe 290px,#ff00d7 314px,#ff00b4 344px,#ff0093 383px,#ff0075 435px,#ff0070 445px)"></i>
<i style="height:1px;background:linear-gradient(90deg,#005fff 56px,#013bff 144px,#8617ff 224px,#e000ff 274px,#ff00fe 291px,#ff00d7 315px,#ff00b4 345px,#ff0093 384px,#ff0075 436px,#ff0071 444px)"></i>
<i style="height:1px;background:linear-gradient(90deg,#005dff 57px,#003aff 144px,#8516ff 224px,#d0f 273px,#ff00fe 292px,#ff00d7 316px,#ff00b3 347px,#ff0092 387px,#ff0074 440px,#ff0073 443px)"></i>
<i style="height:1px;background:linear-gradient(90deg,#005cff 58px,#0039ff 144px,#8615ff 225px,#d900ff 272px,#ff00fe 293px,#ff00d8 317px,#ff00b3 348px,#ff0092 388px,#ff0074 441px,#ff0074 442px)"></i>
<i style="height:1px;background:linear-gradient(90deg,#005bff 58px,#0038ff 144px,#8315ff 224px,#d600ff 271px,#ff00fe 294px,#ff00d8 318px,#ff00b4 349px,#ff0093 389px,#ff0075 441px)"></i>
<i style="height:1px;background:linear-gradient(90deg,#005aff 59px,#0137ff 145px,#8614ff 226px,#d500ff 271px,#ff00fe 295px,#ff00d8 319px,#ff00b4 350px,#ff0093 390px,#ff0076 440px)"></i>
<i style="height:1px;background:linear-gradient(90deg,#0059ff 59px,#0137ff 145px,#8613ff 227px,#d100ff 270px,#ff00fe 296px,#ff00d7 321px,#ff00b3 352px,#ff0092 393px,#ff0078 439px)"></i>
<i style="height:1px;background:linear-gradient(90deg,#0058ff 60px,#0136ff 145px,#8512ff 227px,#ce00ff 269px,#ff00fe 297px,#ff00d7 322px,#ff00b3 354px,#ff0092 395px,#ff0079 438px)"></i>
<i style="height:1px;background:linear-gradient(90deg,#0057ff 60px,#0135ff 145px,#8611ff 228px,#cb00ff 268px,#ff00fe 298px,#ff00d7 323px,#ff00b3 355px,#ff0092 396px,#ff007a 437px)"></i>
<i style="height:1px;background:linear-gradient(90deg,#0056ff 61px,#0034ff 145px,#8510ff 228px,#c800ff 267px,#ff00fe 299px,#ff00d7 324px,#ff00b3 356px,#ff0092 397px,#ff007c 436px)"></i>
<i style="height:1px;background:linear-gradient(90deg,#05f 61px,#0034ff 145px,#8610ff 229px,#c400ff 266px,#ff00fe 300px,#ff00d7 325px,#ff00b3 357px,#ff0093 398px,#ff007d 435px)"></i>
<i style="height:1px;background:linear-gradient(90deg,#0054ff 62px,#0133ff 146px,#860fff 230px,#c100ff 265px,#ff00fd 301px,#ff00d7 326px,#ff00b4 358px,#ff0092 400px,#ff007f 434px)"></i>
<i style="height:1px;background:linear-gradient(90deg,#0053ff 62px,#0132ff 146px,#870eff 231px,#be00ff 264px,#f0f 301px,#ff00d8 327px,#ff00b4 359px,#ff0093 401px,#ff0080 433px)"></i>
<i style="height:1px;background:linear-gradient(90deg,#0052ff 63px,#0131ff 146px,#860dff 231px,#b0f 263px,#f0f 302px,#ff00d8 328px,#ff00b4 360px,#ff0093 402px,#ff0081 432px)"></i>
<i style="height:1px;background:linear-gradient(90deg,#0051ff 63px,#0131ff 146px,#870cff 232px,#b800ff 262px,#f0f 303px,#ff00d8 329px,#ff00b4 361px,#ff0093 403px,#ff0083 431px)"></i>
<i style="height:1px;background:linear-gradient(90deg,#0050ff 64px,#0030ff 146px,#860cff 232px,#b500ff 261px,#f0f 304px,#ff00d8 330px,#ff00b4 363px,#ff0093 405px,#ff0084 430px)"></i>
<i style="height:1px;background:linear-gradient(90deg,#004eff 65px,#002fff 146px,#850bff 232px,#b200ff 260px,#f0f 305px,#ff00d8 331px,#ff00b4 364px,#ff0093 407px,#ff0086 429px)"></i>
<i style="height:1px;background:linear-gradient(90deg,#004eff 65px,#012eff 147px,#870aff 234px,#b100ff 260px,#f0f 306px,#ff00d8 332px,#ff00b4 365px,#ff0093 408px,#ff0087 428px)"></i>
<i style="height:1px;background:linear-gradient(90deg,#004dff 66px,#012eff 147px,#8609ff 234px,#ae00ff 259px,#f0f 307px,#ff00d8 333px,#ff00b5 366px,#ff0093 409px,#ff0089 427px)"></i>
<i style="height:1px;background:linear-gradient(90deg,#004cff 66px,#012dff 147px,#8708ff 235px,#ac00ff 258px,#f0f 308px,#ff00d9 334px,#ff00b5 367px,#ff0094 410px,#ff008a 426px)"></i>
<i style="height:1px;background:linear-gradient(90deg,#004bff 67px,#012cff 147px,#8608ff 235px,#a900ff 257px,#f0f 309px,#ff00d9 335px,#ff00b5 368px,#ff0094 411px,#ff008b 426px)"></i>
<i style="height:1px;background:linear-gradient(90deg,#004aff 67px,#002cff 147px,#8607ff 236px,#a600ff 256px,#f0f 310px,#ff00d9 336px,#ff00b5 369px,#ff0094 412px,#ff008c 425px)"></i>
<i style="height:1px;background:linear-gradient(90deg,#0049ff 68px,#002bff 147px,#8507ff 236px,#a500ff 256px,#f0f 311px,#ff00d8 338px,#ff00b4 372px,#ff0093 416px,#ff008e 424px)"></i>
<i style="height:1px;background:linear-gradient(90deg,#0048ff 69px,#012aff 148px,#8705ff 238px,#a200ff 255px,#f0f 312px,#ff00d8 339px,#ff00b4 373px,#ff0093 417px,#ff008f 423px)"></i>
<i style="height:1px;background:linear-gradient(90deg,#0047ff 69px,#0129ff 148px,#8705ff 238px,#9f00ff 254px,#f0f 313px,#ff00d8 340px,#ff00b4 374px,#ff0093 418px,#ff0091 422px)"></i>
<i style="height:1px;background:linear-gradient(90deg,#0046ff 70px,#0129ff 148px,#8604ff 238px,#9e00ff 254px,#f0f 314px,#ff00d8 341px,#ff00b5 375px,#ff0094 419px,#ff0092 421px)"></i>
<i style="height:1px;background:linear-gradient(90deg,#0045ff 70px,#0128ff 148px,#8604ff 239px,#9d00ff 254px,#f0f 315px,#ff00d8 342px,#ff00b5 376px,#ff0094 420px)"></i>
<i style="height:1px;background:linear-gradient(90deg,#04f 71px,#0028ff 148px,#8503ff 239px,#9c00ff 254px,#f0f 316px,#ff00d8 343px,#ff00b4 378px,#ff0096 419px)"></i>
<i style="height:1px;background:linear-gradient(90deg,#0043ff 71px,#0027ff 148px,#8602ff 240px,#9e00ff 256px,#f0f 317px,#ff00d8 344px,#ff00b4 379px,#ff0097 418px)"></i>
<i style="height:1px;background:linear-gradient(90deg,#0042ff 72px,#0126ff 149px,#8602ff 241px,#f0f 318px,#ff00d7 346px,#ff00b4 381px,#f09 417px)"></i>
<i style="height:1px;background:linear-gradient(90deg,#0042ff 72px,#0126ff 149px,#8701ff 242px,#f0f 319px,#ff00d8 347px,#ff00b4 382px,#ff009a 416px)"></i>
<i style="height:1px;background:linear-gradient(90deg,#0041ff 73px,#0125ff 149px,#8600ff 242px,#ff00fe 320px,#ff00d8 348px,#ff00b4 383px,#ff009c 415px)"></i>
<i style="height:1px;background:linear-gradient(90deg,#0040ff 74px,#0124ff 149px,#8700ff 243px,#ff00fe 321px,#ff00d8 349px,#ff00b4 385px,#ff009e 414px)"></i>
<i style="height:1px;background:linear-gradient(90deg,#003fff 74px,#0124ff 149px,#8600ff 243px,#ff00fe 322px,#ff00d8 350px,#ff00b4 386px,#ff009f 413px)"></i>
<i style="height:1px;background:linear-gradient(90deg,#003eff 75px,#0023ff 149px,#8500ff 243px,#ff00fe 323px,#ff00d8 351px,#ff00b4 387px,#ff00a1 412px)"></i>
<i style="height:1px;background:linear-gradient(90deg,#003dff 75px,#0122ff 150px,#8400ff 243px,#ff00fe 324px,#ff00d8 352px,#ff00b4 388px,#ff00a3 411px)"></i>
<i style="height:1px;background:linear-gradient(90deg,#003cff 76px,#0122ff 150px,#8200ff 242px,#ff00fe 325px,#ff00d7 354px,#ff00b4 390px,#ff00a4 410px)"></i>
<i style="height:1px;background:linear-gradient(90deg,#003cff 76px,#0121ff 150px,#7f00ff 241px,#ff00fe 326px,#ff00d7 355px,#ff00b3 392px,#ff00a6 409px)"></i>
<i style="height:1px;background:linear-gradient(90deg,#003bff 77px,#0121ff 150px,#7d00ff 240px,#ff00fe 327px,#ff00d7 356px,#ff00b3 393px,#ff00a8 408px)"></i>
<i style="height:1px;background:linear-gradient(90deg,#003aff 78px,#0120ff 150px,#7b00ff 239px,#ff00fe 328px,#ff00d8 357px,#ff00b4 394px,#ff00a9 407px)"></i>
<i style="height:1px;background:linear-gradient(90deg,#0039ff 78px,#0020ff 150px,#7900ff 238px,#ff00fe 329px,#ff00d8 358px,#ff00b4 395px,#ff00ab 406px)"></i>
<i style="height:1px;background:linear-gradient(90deg,#0038ff 79px,#011fff 151px,#7600ff 237px,#ff00fe 330px,#ff00d8 359px,#ff00b4 396px,#ff00ad 405px)"></i>
<i style="height:1px;background:linear-gradient(90deg,#0038ff 79px,#011fff 151px,#7400ff 236px,#fd00ff 329px,#ff00f8 335px,#ff00d2 365px,#ff00af 404px)"></i>
<i style="height:1px;background:linear-gradient(90deg,#0037ff 80px,#011eff 151px,#7200ff 235px,#fa00ff 328px,#ff00fd 333px,#ff00d6 363px,#ff00b2 401px,#ff00b0 403px)"></i>
<i style="height:1px;background:linear-gradient(90deg,#0036ff 81px,#011eff 151px,#7000ff 234px,#f800ff 328px,#ff00fe 333px,#ff00d7 363px,#ff00b3 401px,#ff00b2 403px)"></i>
<i style="height:1px;background:linear-gradient(90deg,#0035ff 81px,#011dff 151px,#6e00ff 233px,#f500ff 327px,#ff00fe 334px,#ff00d7 364px,#ff00b3 402px)"></i>
<i style="height:1px;background:linear-gradient(90deg,#0034ff 82px,#001dff 151px,#6c00ff 232px,#f400ff 327px,#ff00fe 335px,#ff00d7 365px,#ff00b5 401px)"></i>
<i style="height:1px;background:linear-gradient(90deg,#0034ff 82px,#021cff 152px,#6a00ff 231px,#f100ff 326px,#ff00fe 336px,#ff00d7 366px,#ff00b7 400px)"></i>
<i style="height:1px;background:linear-gradient(90deg,#03f 83px,#011bff 152px,#6900ff 231px,#f100ff 327px,#ff00fe 337px,#ff00d8 367px,#ff00b9 399px)"></i>
<i style="height:1px;background:linear-gradient(90deg,#0032ff 84px,#011bff 152px,#6700ff 230px,#e0f 326px,#ff00fe 338px,#ff00d8 368px,#f0b 398px)"></i>
<i style="height:1px;background:linear-gradient(90deg,#0032ff 84px,#011aff 152px,#6500ff 229px,#ed00ff 326px,#ff00fe 339px,#ff00d7 370px,#ff00bd 397px)"></i>
<i style="height:1px;background:linear-gradient(90deg,#0031ff 85px,#011aff 152px,#6300ff 228px,#ea00ff 325px,#ff00fe 340px,#ff00d7 371px,#ff00bf 396px)"></i>
<i style="height:1px;background:linear-gradient(90deg,#0030ff 85px,#0119ff 152px,#6100ff 227px,#e900ff 325px,#ff00fe 341px,#ff00d7 372px,#ff00c1 395px)"></i>
<i style="height:1px;background:linear-gradient(90deg,#002fff 86px,#0019ff 152px,#5f00ff 226px,#e600ff 324px,#ff00fe 342px,#ff00d7 373px,#ff00c3 394px)"></i>
<i style="height:1px;background:linear-gradient(90deg,#002fff 86px,#0118ff 153px,#5d00ff 225px,#e500ff 324px,#ff00fe 343px,#ff00d7 374px,#ff00c5 393px)"></i>
<i style="height:1px;background:linear-gradient(90deg,#002eff 87px,#0118ff 153px,#5b00ff 224px,#e200ff 323px,#ff00fe 344px,#ff00d7 375px,#ff00c7 392px)"></i>
<i style="height:1px;background:linear-gradient(90deg,#002dff 88px,#0117ff 153px,#5900ff 223px,#e100ff 323px,#ff00fe 345px,#ff00d7 376px,#ff00c9 391px)"></i>
<i style="height:1px;background:linear-gradient(90deg,#002cff 88px,#0117ff 153px,#5700ff 222px,#de00ff 322px,#ff00fe 346px,#ff00d7 378px,#ff00cb 390px)"></i>
<i style="height:1px;background:linear-gradient(90deg,#002cff 89px,#0116ff 153px,#50f 221px,#d0f 322px,#ff00fe 347px,#ff00d7 379px,#ff00cd 389px)"></i>
<i style="height:1px;background:linear-gradient(90deg,#002bff 89px,#0016ff 153px,#5400ff 220px,#da00ff 321px,#ff00fe 348px,#ff00d7 380px,#ff00cf 388px)"></i>
<i style="height:1px;background:linear-gradient(90deg,#002aff 90px,#0115ff 154px,#5200ff 219px,#d900ff 321px,#ff00fe 349px,#ff00d7 381px,#ff00d1 387px)"></i>
<i style="height:1px;background:linear-gradient(90deg,#002aff 91px,#0115ff 154px,#5000ff 218px,#d700ff 320px,#ff00fe 350px,#ff00d7 382px,#ff00d3 386px)"></i>
<i style="height:1px;background:linear-gradient(90deg,#0029ff 91px,#0114ff 154px,#4f00ff 218px,#d700ff 321px,#ff00fd 351px,#ff00d7 383px,#ff00d5 385px)"></i>
<i style="height:1px;background:linear-gradient(90deg,#0028ff 92px,#0114ff 154px,#4e00ff 217px,#d400ff 320px,#ff00fd 352px,#ff00d7 384px)"></i>
<i style="height:1px;background:linear-gradient(90deg,#0027ff 93px,#0114ff 154px,#4c00ff 216px,#d300ff 320px,#ff00fd 353px,#ff00d9 383px)"></i>
<i style="height:1px;background:linear-gradient(90deg,#0027ff 93px,#0013ff 154px,#4a00ff 215px,#d100ff 319px,#ff00fd 354px,#ff00dc 382px)"></i>
<i style="height:1px;background:linear-gradient(90deg,#0026ff 94px,#0112ff 155px,#4800ff 214px,#cf00ff 319px,#f0f 354px,#ff00de 381px)"></i>
<i style="height:1px;background:linear-gradient(90deg,#0026ff 94px,#0112ff 155px,#4700ff 213px,#cd00ff 318px,#f0f 355px,#ff00e0 380px)"></i>
<i style="height:1px;background:linear-gradient(90deg,#0025ff 95px,#0112ff 155px,#4500ff 212px,#c0f 318px,#f0f 356px,#ff00e2 379px)"></i>
<i style="height:1px;background:linear-gradient(90deg,#0024ff 96px,#0111ff 155px,#4300ff 211px,#c900ff 317px,#f0f 357px,#ff00e4 379px)"></i>
<i style="height:1px;background:linear-gradient(90deg,#0024ff 96px,#0111ff 155px,#4200ff 210px,#c800ff 317px,#f0f 358px,#ff00e6 378px)"></i>
<i style="height:1px;background:linear-gradient(90deg,#0023ff 97px,#0010ff 155px,#4000ff 209px,#c700ff 317px,#f0f 359px,#ff00e8 377px)"></i>
<i style="height:1px;background:linear-gradient(90deg,#02f 98px,#0110ff 156px,#3e00ff 208px,#c500ff 316px,#f0f 360px,#ff00eb 376px)"></i>
<i style="height:1px;background:linear-gradient(90deg,#02f 98px,#010fff 156px,#3d00ff 207px,#c400ff 316px,#f0f 361px,#ff00ed 375px)"></i>
<i style="height:1px;background:linear-gradient(90deg,#0021ff 99px,#010fff 156px,#3c00ff 207px,#c300ff 316px,#f0f 362px,#ff00ef 374px)"></i>
<i style="height:1px;background:linear-gradient(90deg,#0020ff 100px,#010fff 156px,#3b00ff 206px,#c200ff 316px,#ff00fe 363px,#ff00f2 373px)"></i>
<i style="height:1px;background:linear-gradient(90deg,#0020ff 100px,#010eff 156px,#3900ff 205px,#c000ff 315px,#ff00fe 364px,#ff00f4 372px)"></i>
<i style="height:1px;background:linear-gradient(90deg,#001fff 101px,#010eff 156px,#3700ff 204px,#bf00ff 315px,#ff00fe 365px,#ff00f7 371px)"></i>
<i style="height:1px;background:linear-gradient(90deg,#001eff 102px,#010dff 157px,#3600ff 203px,#bc00ff 314px,#ff00fe 366px,#ff00f9 370px)"></i>
<i style="height:1px;background:linear-gradient(90deg,#001eff 102px,#010dff 157px,#3400ff 202px,#b0f 314px,#ff00fe 367px,#ff00fc 369px)"></i>
<i style="height:1px;background:linear-gradient(90deg,#001dff 103px,#010dff 157px,#30f 201px,#b900ff 313px,#ff00fe 368px)"></i>
<i style="height:1px;background:linear-gradient(90deg,#001dff 103px,#010cff 157px,#3100ff 200px,#b800ff 313px,#fd00ff 367px)"></i>
<i style="height:1px;background:linear-gradient(90deg,#001cff 104px,#010cff 157px,#3000ff 199px,#b600ff 312px,#fb00ff 366px)"></i>
<i style="height:1px;background:linear-gradient(90deg,#001bff 105px,#010bff 157px,#2e00ff 198px,#b500ff 312px,#f800ff 365px)"></i>
<i style="height:1px;background:linear-gradient(90deg,#001bff 105px,#020bff 158px,#2d00ff 197px,#b300ff 311px,#f500ff 364px)"></i>
<i style="height:1px;background:linear-gradient(90deg,#001aff 106px,#010aff 158px,#2c00ff 197px,#b300ff 312px,#f300ff 363px)"></i>
<i style="height:1px;background:linear-gradient(90deg,#001aff 107px,#010aff 158px,#2b00ff 196px,#b100ff 311px,#f100ff 362px)"></i>
<i style="height:1px;background:linear-gradient(90deg,#0019ff 107px,#010aff 158px,#2a00ff 195px,#b000ff 311px,#e0f 361px)"></i>
<i style="height:1px;background:linear-gradient(90deg,#0019ff 108px,#0109ff 158px,#2800ff 194px,#ae00ff 310px,#ec00ff 360px)"></i>
<i style="height:1px;background:linear-gradient(90deg,#0018ff 109px,#0109ff 158px,#2700ff 193px,#ad00ff 310px,#e900ff 359px)"></i>
<i style="height:1px;background:linear-gradient(90deg,#0017ff 110px,#0209ff 159px,#2500ff 192px,#ab00ff 309px,#e700ff 358px)"></i>
<i style="height:1px;background:linear-gradient(90deg,#0017ff 110px,#0108ff 159px,#2400ff 191px,#a0f 309px,#e500ff 357px)"></i>
<i style="height:1px;background:linear-gradient(90deg,#0016ff 111px,#0108ff 159px,#2400ff 191px,#a900ff 309px,#e200ff 356px)"></i>
<i style="height:1px;background:linear-gradient(90deg,#0016ff 112px,#0108ff 159px,#20f 190px,#a900ff 309px,#e100ff 356px)"></i>
<i style="height:1px;background:linear-gradient(90deg,#0015ff 112px,#0107ff 159px,#2100ff 189px,#a700ff 308px,#df00ff 355px)"></i>
<i style="height:1px;background:linear-gradient(90deg,#0014ff 113px,#0107ff 159px,#1f00ff 188px,#a600ff 308px,#d0f 354px)"></i>
<i style="height:1px;background:linear-gradient(90deg,#0014ff 114px,#0206ff 160px,#1e00ff 187px,#a400ff 307px,#da00ff 353px)"></i>
<i style="height:1px;background:linear-gradient(90deg,#0013ff 114px,#0106ff 160px,#1d00ff 186px,#a300ff 307px,#d800ff 352px)"></i>
<i style="height:1px;background:linear-gradient(90deg,#0013ff 115px,#0106ff 160px,#1b00ff 185px,#a100ff 306px,#d600ff 351px)"></i>
<i style="height:1px;background:linear-gradient(90deg,#0012ff 116px,#0105ff 160px,#1b00ff 185px,#a100ff 307px,#d400ff 350px)"></i>
<i style="height:1px;background:linear-gradient(90deg,#0012ff 116px,#0105ff 160px,#1a00ff 184px,#9f00ff 306px,#d100ff 349px)"></i>
<i style="height:1px;background:linear-gradient(90deg,#01f 117px,#0105ff 160px,#1900ff 183px,#9f00ff 306px,#cf00ff 348px)"></i>
<i style="height:1px;background:linear-gradient(90deg,#01f 118px,#0104ff 160px,#1700ff 182px,#9d00ff 305px,#cd00ff 347px)"></i>
<i style="height:1px;background:linear-gradient(90deg,#0010ff 119px,#0104ff 161px,#1700ff 182px,#9d00ff 306px,#cb00ff 346px)"></i>
<i style="height:1px;background:linear-gradient(90deg,#0010ff 119px,#0104ff 161px,#1700ff 182px,#9c00ff 306px,#c900ff 345px)"></i>
<i style="height:1px;background:linear-gradient(90deg,#000fff 120px,#0103ff 161px,#1600ff 182px,#9d00ff 307px,#c700ff 344px)"></i>
<i style="height:1px;background:linear-gradient(90deg,#000eff 121px,#0103ff 161px,#1600ff 182px,#9c00ff 307px,#c500ff 343px)"></i>
<i style="height:1px;background:linear-gradient(90deg,#000eff 121px,#0103ff 161px,#1700ff 183px,#9d00ff 309px,#c300ff 342px)"></i>
<i style="height:1px;background:linear-gradient(90deg,#000eff 122px,#0102ff 161px,#1800ff 184px,#9e00ff 310px,#c100ff 341px)"></i>
<i style="height:1px;background:linear-gradient(90deg,#000dff 123px,#0102ff 162px,#2400ff 196px,#a0f 322px,#bf00ff 340px)"></i>
<i style="height:1px;background:linear-gradient(90deg,#000cff 124px,#0102ff 162px,#6400ff 258px,#bd00ff 339px)"></i>
<i style="height:1px;background:linear-gradient(90deg,#000cff 124px,#0101ff 162px,#8700ff 291px,#b0f 338px)"></i>
<i style="height:1px;background:linear-gradient(90deg,#000bff 125px,#0101ff 162px,#8600ff 291px,#b900ff 337px)"></i>
<i style="height:1px;background:linear-gradient(90deg,#000bff 126px,#0101ff 162px,#8700ff 292px,#b700ff 336px)"></i>
<i style="height:1px;background:linear-gradient(90deg,#000aff 127px,#0101ff 162px,#8600ff 292px,#b500ff 335px)"></i>
<i style="height:1px;background:linear-gradient(90deg,#000aff 127px,#0100ff 163px,#8700ff 294px,#b300ff 334px)"></i>
<i style="height:1px;background:linear-gradient(90deg,#0009ff 128px,#0100ff 163px,#8700ff 294px,#b100ff 333px)"></i>
<i style="height:1px;background:linear-gradient(90deg,#0009ff 129px,#0100ff 163px,#8700ff 295px,#af00ff 332px)"></i>
<i style="height:1px;background:linear-gradient(90deg,#0008ff 130px,#0100ff 163px,#8700ff 295px,#ae00ff 332px)"></i>
<i style="height:1px;background:linear-gradient(90deg,#0008ff 130px,#0100ff 163px,#8600ff 295px,#ac00ff 331px)"></i>
<i style="height:1px;background:linear-gradient(90deg,#0007ff 131px,#0100ff 163px,#8600ff 296px,#a0f 330px)"></i>
<i style="height:1px;background:linear-gradient(90deg,#0007ff 132px,#0100ff 164px,#8700ff 297px,#a900ff 329px)"></i>
<i style="height:1px;background:linear-gradient(90deg,#0006ff 133px,#00f 163px,#8600ff 297px,#a700ff 328px)"></i>
<i style="height:1px;background:linear-gradient(90deg,#0006ff 133px,#00f 162px,#7200ff 278px,#a500ff 327px)"></i>
<i style="height:1px;background:linear-gradient(90deg,#0005ff 134px,#00f 162px,#6d00ff 274px,#a300ff 326px)"></i>
<i style="height:1px;background:linear-gradient(90deg,#0005ff 135px,#00f 161px,#0700ff 170px,#8c00ff 305px,#a100ff 325px)"></i>
<i style="height:1px;background:linear-gradient(90deg,#0004ff 136px,#00f 161px,#0700ff 171px,#8d00ff 306px,#a000ff 324px)"></i>
<i style="height:1px;background:linear-gradient(90deg,#0004ff 136px,#00f 160px,#0300ff 167px,#8900ff 303px,#9e00ff 323px)"></i>
<i style="height:1px;background:linear-gradient(90deg,#0004ff 137px,#00f 160px,#0300ff 167px,#8900ff 303px,#9c00ff 322px)"></i>
<i style="height:1px;background:linear-gradient(90deg,#0003ff 138px,#00f 161px,#0400ff 168px,#8a00ff 305px,#9a00ff 321px)"></i>
<i style="height:1px;background:linear-gradient(90deg,#0003ff 139px,#00f 163px,#7000ff 280px,#90f 320px)"></i>
<i style="height:1px;background:linear-gradient(90deg,#0002ff 140px,#0100ff 165px,#8700ff 303px,#9700ff 319px)"></i>
<i style="height:1px;background:linear-gradient(90deg,#0001ff 141px,#0100ff 165px,#8600ff 303px,#9500ff 318px)"></i>
<i style="height:1px;background:linear-gradient(90deg,#0001ff 141px,#0200ff 166px,#8700ff 305px,#9400ff 317px)"></i>
<i style="height:1px;background:linear-gradient(90deg,#0001ff 142px,#0100ff 166px,#8700ff 305px,#9200ff 316px)"></i>
<i style="height:1px;background:linear-gradient(90deg,#00f 143px,#0100ff 166px,#8700ff 306px,#9000ff 315px)"></i>
<i style="height:1px;background:linear-gradient(90deg,#00f 144px,#0100ff 166px,#8700ff 306px,#8f00ff 314px)"></i>
<i style="height:1px;background:linear-gradient(90deg,#00f 145px,#0100ff 166px,#8700ff 307px,#8d00ff 313px)"></i>
<i style="height:1px;background:linear-gradient(90deg,#00f 145px,#0100ff 166px,#8600ff 307px,#8b00ff 312px)"></i>
<i style="height:1px;background:linear-gradient(90deg,#00f 146px,#0200ff 167px,#8700ff 308px,#8a00ff 311px)"></i>
<i style="height:1px;background:linear-gradient(90deg,#00f 147px,#0100ff 167px,#8700ff 309px,#80f 310px)"></i>
<i style="height:1px;background:linear-gradient(90deg,#00f 148px,#0100ff 167px,#8700ff 309px)"></i>
<i style="height:1px;background:linear-gradient(90deg,#00f 149px,#0100ff 167px,#8600ff 309px)"></i>
<i style="height:1px;background:linear-gradient(90deg,#00f 150px,#0100ff 167px,#8400ff 308px)"></i>
<i style="height:1px;background:linear-gradient(90deg,#00f 151px,#0100ff 167px,#8300ff 307px)"></i>
<i style="height:1px;background:linear-gradient(90deg,#00f 151px,#0200ff 168px,#8100ff 306px)"></i>
<i style="height:1px;background:linear-gradient(90deg,#00f 152px,#0100ff 168px,#8000ff 305px)"></i>
<i style="height:1px;background:linear-gradient(90deg,#00f 153px,#0100ff 168px,#7e00ff 304px)"></i>
<i style="height:1px;background:linear-gradient(90deg,#00f 154px,#0100ff 168px,#7d00ff 303px)"></i>
<i style="height:1px;background:linear-gradient(90deg,#00f 155px,#0200ff 169px,#7b00ff 302px)"></i>
<i style="height:1px;background:linear-gradient(90deg,#00f 156px,#0200ff 169px,#7a00ff 301px)"></i>
<i style="height:1px;background:linear-gradient(90deg,#00f 157px,#0200ff 169px,#7800ff 300px)"></i>
<i style="height:1px;background:linear-gradient(90deg,#00f 158px,#0100ff 169px,#70f 299px)"></i>
<i style="height:1px;background:linear-gradient(90deg,#00f 159px,#0100ff 169px,#7500ff 298px)"></i>
<i style="height:1px;background:linear-gradient(90deg,#00f 160px,#0200ff 170px,#7400ff 297px)"></i>
<i style="height:1px;background:linear-gradient(90deg,#00f 160px,#0200ff 170px,#7300ff 296px)"></i>
<i style="height:1px;background:linear-gradient(90deg,#00f 161px,#0200ff 170px,#7100ff 295px)"></i>
<i style="height:1px;background:linear-gradient(90deg,#00f 162px,#0200ff 170px,#7000ff 294px)"></i>
<i style="height:1px;background:linear-gradient(90deg,#00f 163px,#0200ff 171px,#6e00ff 293px)"></i>
<i style="height:1px;background:linear-gradient(90deg,#00f 164px,#0200ff 171px,#6d00ff 292px)"></i>
<i style="height:1px;background:linear-gradient(90deg,#00f 165px,#0300ff 172px,#6b00ff 291px)"></i>
<i style="height:1px;background:linear-gradient(90deg,#00f 166px,#0400ff 174px,#6a00ff 290px)"></i>
<i style="height:1px;background:linear-gradient(90deg,#00f 167px,#1700ff 196px,#6900ff 289px)"></i>
<i style="height:1px;background:linear-gradient(90deg,#00f 168px,#6700ff 288px)"></i>
<i style="height:1px;background:linear-gradient(90deg,#00f 169px,#60f 287px)"></i>
<i style="height:1px;background:linear-gradient(90deg,#0100ff 170px,#6500ff 286px)"></i>
<i style="height:1px;background:linear-gradient(90deg,#0100ff 171px,#6400ff 286px)"></i>
<i style="height:1px;background:linear-gradient(90deg,#0200ff 172px,#6300ff 285px)"></i>
<i style="height:1px;background:linear-gradient(90deg,#0300ff 173px,#6200ff 284px)"></i>
<i style="height:1px;background:linear-gradient(90deg,#0300ff 174px,#6000ff 283px)"></i>
<i style="height:1px;background:linear-gradient(90deg,#0400ff 175px,#5f00ff 282px)"></i>
<i style="height:1px;background:linear-gradient(90deg,#0500ff 176px,#5e00ff 281px)"></i>
<i style="height:1px;background:linear-gradient(90deg,#0500ff 177px,#5c00ff 280px)"></i>
<i style="height:1px;background:linear-gradient(90deg,#0600ff 178px,#5b00ff 279px)"></i>
<i style="height:1px;background:linear-gradient(90deg,#0700ff 179px,#5a00ff 278px)"></i>
<i style="height:1px;background:linear-gradient(90deg,#0700ff 180px,#5900ff 277px)"></i>
<i style="height:1px;background:linear-gradient(90deg,#0800ff 181px,#5700ff 276px)"></i>
<i style="height:1px;background:linear-gradient(90deg,#0900ff 182px,#5600ff 275px)"></i>
<i style="height:1px;background:linear-gradient(90deg,#0a00ff 184px,#50f 274px)"></i>
<i style="height:1px;background:linear-gradient(90deg,#0b00ff 185px,#5400ff 273px)"></i>
<i style="height:1px;background:linear-gradient(90deg,#0b00ff 186px,#5200ff 272px)"></i>
<i style="height:1px;background:linear-gradient(90deg,#0c00ff 187px,#5100ff 271px)"></i>
<i style="height:1px;background:linear-gradient(90deg,#0d00ff 188px,#5000ff 270px)"></i>
<i style="height:1px;background:linear-gradient(90deg,#0d00ff 189px,#4f00ff 269px)"></i>
<i style="height:1px;background:linear-gradient(90deg,#0e00ff 190px,#4e00ff 268px)"></i>
<i style="height:1px;background:linear-gradient(90deg,#0f00ff 191px,#4c00ff 267px)"></i>
<i style="height:1px;background:linear-gradient(90deg,#1000ff 193px,#4b00ff 266px)"></i>
<i style="height:1px;background:linear-gradient(90deg,#10f 194px,#4a00ff 265px)"></i>
<i style="height:1px;background:linear-gradient(90deg,#10f 195px,#4900ff 264px)"></i>
<i style="height:1px;background:linear-gradient(90deg,#1200ff 196px,#4800ff 263px)"></i>
<i style="height:1px;background:linear-gradient(90deg,#1300ff 198px,#4700ff 262px)"></i>
<i style="height:1px;background:linear-gradient(90deg,#1400ff 199px,#4600ff 262px)"></i>
<i style="height:1px;background:linear-gradient(90deg,#1500ff 200px,#4500ff 261px)"></i>
<i style="height:1px;background:linear-gradient(90deg,#1600ff 202px,#40f 260px)"></i>
<i style="height:1px;background:linear-gradient(90deg,#1700ff 203px,#4300ff 259px)"></i>
<i style="height:1px;background:linear-gradient(90deg,#1700ff 204px,#4200ff 258px)"></i>
<i style="height:1px;background:linear-gradient(90deg,#1800ff 205px,#4100ff 257px)"></i>
<i style="height:1px;background:linear-gradient(90deg,#1900ff 207px,#4000ff 256px)"></i>
<i style="height:1px;background:linear-gradient(90deg,#1a00ff 208px,#3f00ff 255px)"></i>
<i style="height:1px;background:linear-gradient(90deg,#1a00ff 209px,#3d00ff 254px)"></i>
<i style="height:1px;background:linear-gradient(90deg,#1c00ff 211px,#3c00ff 253px)"></i>
<i style="height:1px;background:linear-gradient(90deg,#1c00ff 212px,#3b00ff 252px)"></i>
<i style="height:1px;background:linear-gradient(90deg,#1d00ff 213px,#3a00ff 251px)"></i>
<i style="height:1px;background:linear-gradient(90deg,#1d00ff 214px,#3900ff 250px)"></i>
<i style="height:1px;background:linear-gradient(90deg,#1e00ff 215px,#3800ff 249px)"></i>
<i style="height:1px;background:linear-gradient(90deg,#1f00ff 217px,#3700ff 248px)"></i>
<i style="height:1px;background:linear-gradient(90deg,#2000ff 218px,#3600ff 247px)"></i>
<i style="height:1px;background:linear-gradient(90deg,#2000ff 219px,#3500ff 246px)"></i>
<i style="height:1px;background:linear-gradient(90deg,#2100ff 220px,#3400ff 245px)"></i>
<i style="height:1px;background:linear-gradient(90deg,#2100ff 221px,#30f 244px)"></i>
<i style="height:1px;background:linear-gradient(90deg,#20f 222px,#3200ff 243px)"></i>
<i style="height:1px;background:linear-gradient(90deg,#2300ff 224px,#3100ff 242px)"></i>
<i style="height:1px;background:linear-gradient(90deg,#2400ff 225px,#3000ff 241px)"></i>
<i style="height:1px;background:linear-gradient(90deg,#2400ff 226px,#2f00ff 240px)"></i>
<i style="height:1px;background:linear-gradient(90deg,#2500ff 227px,#2e00ff 239px)"></i>
<i style="height:1px;background:linear-gradient(90deg,#2600ff 229px,#2e00ff 239px)"></i>
<i style="height:1px;background:linear-gradient(90deg,#2700ff 230px,#2d00ff 238px)"></i>
<i style="height:1px;background:linear-gradient(90deg,#2700ff 231px,#2c00ff 237px)"></i>
<div style="left:0;top:0;width:553px;height:437px;background:rgba(0,0,0,0.40);clip-path:polygon(571px 70.2px,516px 63.7px,515.4px 64.3px,514.7px 64.6px,510px 64.1px,149.2px 345.2px,159.4px 356.8px,167px 364.9px,179.8px 377.8px,188.1px 385.7px,193.2px 390.3px,213.9px 406.4px,228.6px 418.8px,233.8px 423px)"></div>
<div style="left:0;top:0;width:553px;height:437px;background:rgba(0,0,0,0.40);clip-path:polygon(47.6px 12px,36.1px 12.3px,28.7px 13px,21.9px 14.3px,17.7px 15.7px,13.9px 17.8px,10.5px 20.5px,7.6px 24px,5.3px 28.4px,3.6px 33.6px,2.6px 39.7px,3.2px 43.2px,3.4px 51px,3.7px 55.3px,5.1px 65px,7.5px 76.4px,10.8px 89.3px,12.9px 96.4px,18px 112.1px,24.3px 129.5px,35.9px 158.1px,45px 178.5px,50px 188.9px,60.9px 210px,72.4px 230.9px,84.2px 251.4px,96px 271.1px,102px 280.5px,113.8px 298.1px,125px 314.1px,135.7px 328.4px,144.8px 339.8px,52.2px 13.4px,48.8px 13.1px,48.1px 12.7px)"></div>
</div>
<div id="ins">
<i style="height:2px;background:linear-gradient(90deg,#8cffca 0px,#eaffc6 101px,#fffdc4 123px,#ffdca9 158px)"></i>
<i style="height:2px;background:linear-gradient(90deg,#8dffcb 0px,#ecffc8 101px,#fffdc6 121px,#ffdba9 158px)"></i>
<i style="height:2px;background:linear-gradient(90deg,#8effcd 0px,#edffc9 101px,#fffdc7 120px,#ffdaaa 158px)"></i>
<i style="height:2px;background:linear-gradient(90deg,#8fffce 0px,#eeffcb 100px,#fffdc9 118px,#ffd8aa 158px)"></i>
<i style="height:2px;background:linear-gradient(90deg,#90ffcf 0px,#efffcc 100px,#fffdca 117px,#ffd7aa 158px)"></i>
<i style="height:2px;background:linear-gradient(90deg,#91ffd1 0px,#f0ffcd 99px,#fffecc 115px,#ffd6aa 158px)"></i>
<i style="height:2px;background:linear-gradient(90deg,#92ffd2 0px,#f1ffcf 99px,#fffdcd 114px,#ffd4ab 158px)"></i>
<i style="height:2px;background:linear-gradient(90deg,#93ffd3 0px,#f3ffd0 99px,#fffdce 113px,#ffd3ab 158px)"></i>
<i style="height:2px;background:linear-gradient(90deg,#94ffd5 0px,#f3ffd2 98px,#fffdd0 111px,#ffd2ab 158px)"></i>
<i style="height:2px;background:linear-gradient(90deg,#95ffd6 0px,#f5ffd3 98px,#fffdd1 110px,#ffd1ab 158px)"></i>
<i style="height:2px;background:linear-gradient(90deg,#96ffd8 0px,#f5ffd5 97px,#fffdd3 108px,#ffcfac 158px)"></i>
<i style="height:2px;background:linear-gradient(90deg,#97ffd9 0px,#f7ffd7 97px,#fffdd4 107px,#ffceac 158px)"></i>
<i style="height:2px;background:linear-gradient(90deg,#98ffda 0px,#f8ffd8 97px,#fffcd5 106px,#ffcdac 158px)"></i>
<i style="height:2px;background:linear-gradient(90deg,#99ffdc 0px,#f9ffda 96px,#fffdd7 104px,#ffccad 157px,#ffcbac 158px)"></i>
<i style="height:2px;background:linear-gradient(90deg,#9affdd 0px,#faffdb 96px,#fffcd9 103px,#ffccae 156px,#ffcaad 158px)"></i>
<i style="height:2px;background:linear-gradient(90deg,#9bffdf 0px,#fbffdd 95px,#fffcda 102px,#ffcbaf 155px,#ffc9ad 158px)"></i>
<i style="height:2px;background:linear-gradient(90deg,#9dffe0 0px,#fcffde 95px,#fff5d5 107px,#ffc8ad 158px)"></i>
<i style="height:2px;background:linear-gradient(90deg,#9effe2 0px,#fffedf 97px,#ffcdb3 149px,#ffc6ad 158px)"></i>
<i style="height:2px;background:linear-gradient(90deg,#9fffe3 0px,#fffde0 96px,#ffcdb4 148px,#ffc5ad 158px)"></i>
<i style="height:2px;background:linear-gradient(90deg,#a0ffe5 0px,#fffee2 94px,#ffcdb6 146px,#ffc4ae 158px)"></i>
<i style="height:2px;background:linear-gradient(90deg,#a1ffe6 0px,#fffde3 93px,#ffcdb7 145px,#ffc3ae 158px)"></i>
<i style="height:2px;background:linear-gradient(90deg,#a2ffe8 0px,#fffee6 91px,#ffceb9 142px,#ffc2ae 158px)"></i>
<i style="height:2px;background:linear-gradient(90deg,#a3ffe9 0px,#fffde7 90px,#ffcdba 141px,#ffc0ae 158px)"></i>
<i style="height:2px;background:linear-gradient(90deg,#a5ffeb 0px,#fffee9 88px,#ffcebc 139px,#ffbfaf 158px)"></i>
<i style="height:2px;background:linear-gradient(90deg,#a6ffec 0px,#fffdea 87px,#ffcdbd 138px,#ffbeaf 158px)"></i>
<i style="height:2px;background:linear-gradient(90deg,#a7ffee 0px,#fffeec 85px,#ffcdbf 136px,#ffbdaf 158px)"></i>
<i style="height:2px;background:linear-gradient(90deg,#a8fff0 0px,#fffdee 84px,#ffcdc0 135px,#ffbcaf 158px)"></i>
<i style="height:2px;background:linear-gradient(90deg,#a9fff1 0px,#fffef0 82px,#ffcec2 132px,#ffbab0 158px)"></i>
<i style="height:2px;background:linear-gradient(90deg,#abfff3 0px,#fffdf1 81px,#ffcec3 131px,#ffb9b0 158px)"></i>
<i style="height:2px;background:linear-gradient(90deg,#acfff4 0px,#fffef3 79px,#ffcec5 129px,#ffb8b0 158px)"></i>
<i style="height:2px;background:linear-gradient(90deg,#adfff6 0px,#fffdf5 78px,#ffcdc6 128px,#ffb7b0 158px)"></i>
<i style="height:2px;background:linear-gradient(90deg,#aefff8 0px,#fffdf6 77px,#ffcdc7 127px,#ffb6b1 158px)"></i>
<i style="height:2px;background:linear-gradient(90deg,#b0fff9 0px,#fffef8 75px,#ffcdc9 125px,#ffb4b1 158px)"></i>
<i style="height:2px;background:linear-gradient(90deg,#b1fffb 0px,#fffdf9 74px,#ffcdca 124px,#ffb3b1 158px)"></i>
<i style="height:2px;background:linear-gradient(90deg,#b2fffd 0px,#fffefc 72px,#ffcdcc 122px,#ffb2b1 158px)"></i>
<i style="height:2px;background:linear-gradient(90deg,#b4fffe 0px,#fffdfd 71px,#ffcccd 121px,#ffb1b1 158px)"></i>
<i style="height:2px;background:linear-gradient(90deg,#b4feff 0px,#fffbfd 71px,#ffcbcd 121px,#ffb0b2 158px)"></i>
<i style="height:2px;background:linear-gradient(90deg,#b4fcff 0px,#fffafd 71px,#ffcacd 121px,#ffafb2 158px)"></i>
<i style="height:2px;background:linear-gradient(90deg,#b4fbff 0px,#fff8fd 71px,#ffc8cd 121px,#ffaeb2 158px)"></i>
<i style="height:2px;background:linear-gradient(90deg,#b4f9ff 0px,#fff6fd 71px,#ffc7cd 121px,#ffacb2 158px)"></i>
<i style="height:2px;background:linear-gradient(90deg,#b5f7ff 0px,#fff5fd 71px,#ffc6ce 121px,#ffabb3 158px)"></i>
<i style="height:2px;background:linear-gradient(90deg,#b5f6ff 0px,#fff3fe 71px,#ffc4ce 121px,#ffaab3 158px)"></i>
<i style="height:2px;background:linear-gradient(90deg,#b5f4ff 0px,#fff1fe 71px,#ffc2cd 122px,#ffa9b3 158px)"></i>
<i style="height:2px;background:linear-gradient(90deg,#b5f2ff 0px,#fff0fe 71px,#ffc1cd 122px,#ffa8b3 158px)"></i>
<i style="height:2px;background:linear-gradient(90deg,#b5f1ff 0px,#ffeefe 71px,#ffc0ce 122px,#ffa7b3 158px)"></i>
<i style="height:2px;background:linear-gradient(90deg,#b5efff 0px,#ffecfe 71px,#ffbece 122px,#ffa6b4 158px)"></i>
<i style="height:2px;background:linear-gradient(90deg,#b5edff 0px,#ffeafd 72px,#ffbccd 123px,#ffa5b4 158px)"></i>
<i style="height:2px;background:linear-gradient(90deg,#b5ecff 0px,#ffe8fd 72px,#ffbbcd 123px,#ffa3b4 158px)"></i>
<i style="height:2px;background:linear-gradient(90deg,#b5eaff 0px,#ffe7fd 72px,#ffb9cd 124px,#ffa2b4 158px)"></i>
<i style="height:2px;background:linear-gradient(90deg,#b5e9ff 0px,#ffe5fd 72px,#ffb8cd 124px,#ffa1b4 158px)"></i>
<i style="height:2px;background:linear-gradient(90deg,#b6e7ff 0px,#ffe3fd 72px,#ffb7cd 124px,#ffa0b5 158px)"></i>
<i style="height:2px;background:linear-gradient(90deg,#b6e5ff 0px,#ffe2fd 72px,#ffb5cd 124px,#ff9fb5 158px)"></i>
<i style="height:2px;background:linear-gradient(90deg,#b6e4ff 0px,#ffe0fe 72px,#ffb4cd 124px,#ff9eb5 158px)"></i>
<i style="height:2px;background:linear-gradient(90deg,#b6e2ff 0px,#ffdffe 72px,#ffb3ce 124px,#ff9db5 158px)"></i>
<i style="height:2px;background:linear-gradient(90deg,#b6e1ff 0px,#ffddfe 72px,#ffb2ce 124px,#ff9cb5 158px)"></i>
<i style="height:2px;background:linear-gradient(90deg,#b6dfff 0px,#ffdcfe 72px,#ffb1ce 124px,#ff9bb6 158px)"></i>
<i style="height:2px;background:linear-gradient(90deg,#b6deff 0px,#ffdafe 72px,#ffafce 124px,#ff9ab6 158px)"></i>
<i style="height:2px;background:linear-gradient(90deg,#b6dcff 0px,#ffd8fd 73px,#ffadcd 126px,#ff99b6 158px)"></i>
<i style="height:2px;background:linear-gradient(90deg,#b6dbff 0px,#ffd6fd 73px,#ffabcd 126px,#ff97b6 158px)"></i>
<i style="height:2px;background:linear-gradient(90deg,#b6d9ff 0px,#ffd5fd 73px,#ffaacd 126px,#ff96b7 158px)"></i>
<i style="height:2px;background:linear-gradient(90deg,#b7d8ff 0px,#ffd3fd 73px,#ffa9cd 126px,#ff95b7 158px)"></i>
<i style="height:2px;background:linear-gradient(90deg,#b7d6ff 0px,#ffd2fd 73px,#ffa8cd 126px,#ff94b7 158px)"></i>
<i style="height:2px;background:linear-gradient(90deg,#b7d5ff 0px,#ffd0fd 73px,#ffa7ce 126px,#ff93b7 158px)"></i>
<i style="height:2px;background:linear-gradient(90deg,#b7d3ff 0px,#ffcffe 73px,#ffa6ce 126px,#ff92b7 158px)"></i>
</div>
<svg id="ov" width="1440" height="808" viewBox="0 0 1440 808">
<defs>
<linearGradient id="gR" x1="0" y1="0" x2="0" y2="1"><stop offset="0" stop-color="#ff5a5a"/><stop offset="1" stop-color="#ff4444"/></linearGradient>
<linearGradient id="gG" x1="0" y1="0" x2="0" y2="1"><stop offset="0" stop-color="#58aa58"/><stop offset="1" stop-color="#3e9e3e"/></linearGradient>
<linearGradient id="gB" x1="0" y1="0" x2="0" y2="1"><stop offset="0" stop-color="#5a5aff"/><stop offset="1" stop-color="#3a3aff"/></linearGradient>
<linearGradient id="gW" x1="0" y1="0" x2="0" y2="1"><stop offset="0" stop-color="#fff"/><stop offset=".45" stop-color="#fff"/><stop offset="1" stop-color="#7c7c7c"/></linearGradient>
<linearGradient id="gCombo" x1="0" y1="0" x2="0" y2="1"><stop offset="0" stop-color="#5c5c5c"/><stop offset="1" stop-color="#474747"/></linearGradient>
<linearGradient id="gBtn" x1="0" y1="0" x2="0" y2="1"><stop offset="0" stop-color="#9a9a9a"/><stop offset="1" stop-color="#666"/></linearGradient>
<linearGradient id="gBtnD" x1="0" y1="0" x2="0" y2="1"><stop offset="0" stop-color="#3f3f3f"/><stop offset="1" stop-color="#333"/></linearGradient>
<linearGradient id="gBtnL" x1="0" y1="0" x2="0" y2="1"><stop offset="0" stop-color="#b4b4b4"/><stop offset="1" stop-color="#7e7e7e"/></linearGradient>
<linearGradient id="gCirc" x1="0" y1="0" x2="0" y2="1"><stop offset="0" stop-color="#6e6e6e"/><stop offset="1" stop-color="#a2a2a2"/></linearGradient>
<linearGradient id="gHdr" x1="0" y1="0" x2="0" y2="1"><stop offset="0" stop-color="#2f2f2f"/><stop offset=".5" stop-color="#2c2c2c"/><stop offset=".5" stop-color="#1b1b1b"/><stop offset="1" stop-color="#171717"/></linearGradient>
<linearGradient id="gSw" x1="0" y1="0" x2="0" y2="1"><stop offset="0" stop-color="#202020"/><stop offset=".6" stop-color="#2a2a2a"/><stop offset="1" stop-color="#3c3c3c"/></linearGradient>
</defs>
<rect x="44" y="167" width="215" height="320" fill="#242424"/>
<line x1="39" y1="167.5" x2="44" y2="167.5" stroke="#d0d0d0" stroke-width="1"/>
<line x1="44" y1="199.5" x2="259" y2="199.5" stroke="#9a9a9a" stroke-width="1"/>
<line x1="39" y1="199.5" x2="44" y2="199.5" stroke="#d0d0d0" stroke-width="1"/>
<line x1="44" y1="231.5" x2="259" y2="231.5" stroke="#9a9a9a" stroke-width="1"/>
<line x1="39" y1="231.5" x2="44" y2="231.5" stroke="#d0d0d0" stroke-width="1"/>
<line x1="44" y1="264.5" x2="259" y2="264.5" stroke="#9a9a9a" stroke-width="1"/>
<line x1="39" y1="264.5" x2="44" y2="264.5" stroke="#d0d0d0" stroke-width="1"/>
<line x1="44" y1="296.5" x2="259" y2="296.5" stroke="#9a9a9a" stroke-width="1"/>
<line x1="39" y1="296.5" x2="44" y2="296.5" stroke="#d0d0d0" stroke-width="1"/>
<line x1="44" y1="327.5" x2="259" y2="327.5" stroke="#9a9a9a" stroke-width="1"/>
<line x1="39" y1="327.5" x2="44" y2="327.5" stroke="#d0d0d0" stroke-width="1"/>
<line x1="44" y1="359.5" x2="259" y2="359.5" stroke="#9a9a9a" stroke-width="1"/>
<line x1="39" y1="359.5" x2="44" y2="359.5" stroke="#d0d0d0" stroke-width="1"/>
<line x1="44" y1="391.5" x2="259" y2="391.5" stroke="#9a9a9a" stroke-width="1"/>
<line x1="39" y1="391.5" x2="44" y2="391.5" stroke="#d0d0d0" stroke-width="1"/>
<line x1="44" y1="424.5" x2="259" y2="424.5" stroke="#9a9a9a" stroke-width="1"/>
<line x1="39" y1="424.5" x2="44" y2="424.5" stroke="#d0d0d0" stroke-width="1"/>
<line x1="44" y1="455.5" x2="259" y2="455.5" stroke="#9a9a9a" stroke-width="1"/>
<line x1="39" y1="455.5" x2="44" y2="455.5" stroke="#d0d0d0" stroke-width="1"/>
<line x1="39" y1="487.5" x2="44" y2="487.5" stroke="#d0d0d0" stroke-width="1"/>
<line x1="44" y1="166.5" x2="260" y2="166.5" stroke="#777" stroke-width="1"/>
<line x1="44" y1="167.5" x2="260" y2="167.5" stroke="#aaa" stroke-width="1"/>
<line x1="44.5" y1="167" x2="44.5" y2="492" stroke="#aaa" stroke-width="1"/>
<line x1="259.5" y1="167" x2="259.5" y2="492" stroke="#aaa" stroke-width="1"/>
<rect x="65" y="363" width="57" height="124" fill="#000"/>
<rect x="66" y="364" width="55" height="123" fill="url(#gR)"/>
<rect x="122" y="319" width="58" height="168" fill="#000"/>
<rect x="123" y="320" width="56" height="167" fill="url(#gG)"/>
<rect x="180" y="267.5" width="57" height="219.5" fill="#000"/>
<rect x="181" y="268.5" width="55" height="218.5" fill="url(#gB)"/>
<line x1="44" y1="487.5" x2="260" y2="487.5" stroke="#aaa" stroke-width="1"/>
<text x="38" y="173.1" font-size="12.5" fill="#dcdcdc" text-anchor="end">105</text>
<text x="38" y="203.9" font-size="12.5" fill="#dcdcdc" text-anchor="end">104</text>
<text x="38" y="235.9" font-size="12.5" fill="#dcdcdc" text-anchor="end">103</text>
<text x="38" y="268.9" font-size="12.5" fill="#dcdcdc" text-anchor="end">102</text>
<text x="38" y="300.9" font-size="12.5" fill="#dcdcdc" text-anchor="end">101</text>
<text x="38" y="331.9" font-size="12.5" fill="#dcdcdc" text-anchor="end">100</text>
<text x="38" y="363.9" font-size="12.5" fill="#dcdcdc" text-anchor="end">99</text>
<text x="38" y="395.9" font-size="12.5" fill="#dcdcdc" text-anchor="end">98</text>
<text x="38" y="428.9" font-size="12.5" fill="#dcdcdc" text-anchor="end">97</text>
<text x="38" y="459.9" font-size="12.5" fill="#dcdcdc" text-anchor="end">96</text>
<text x="38" y="492.9" font-size="12.5" fill="#dcdcdc" text-anchor="end">95</text>
<text x="103.5" y="162.5" font-size="12.5" fill="#dcdcdc" textLength="71.0" lengthAdjust="spacingAndGlyphs">RGB Balance</text>
<text x="151.6" y="501" font-size="12.5" fill="#dcdcdc" text-anchor="middle">100</text>
<rect x="334" y="167" width="119" height="231" fill="#242424"/>
<line x1="329" y1="167.5" x2="334" y2="167.5" stroke="#d0d0d0" stroke-width="1"/>
<line x1="334" y1="206.5" x2="453" y2="206.5" stroke="#9a9a9a" stroke-width="1"/>
<line x1="329" y1="206.5" x2="334" y2="206.5" stroke="#d0d0d0" stroke-width="1"/>
<line x1="334" y1="245.5" x2="453" y2="245.5" stroke="#9a9a9a" stroke-width="1"/>
<line x1="329" y1="245.5" x2="334" y2="245.5" stroke="#d0d0d0" stroke-width="1"/>
<line x1="334" y1="284.5" x2="453" y2="284.5" stroke="#9a9a9a" stroke-width="1"/>
<line x1="329" y1="284.5" x2="334" y2="284.5" stroke="#d0d0d0" stroke-width="1"/>
<line x1="334" y1="323.5" x2="453" y2="323.5" stroke="#9a9a9a" stroke-width="1"/>
<line x1="329" y1="323.5" x2="334" y2="323.5" stroke="#d0d0d0" stroke-width="1"/>
<line x1="334" y1="361.5" x2="453" y2="361.5" stroke="#9a9a9a" stroke-width="1"/>
<line x1="329" y1="361.5" x2="334" y2="361.5" stroke="#d0d0d0" stroke-width="1"/>
<line x1="329" y1="398.5" x2="334" y2="398.5" stroke="#d0d0d0" stroke-width="1"/>
<line x1="334" y1="166.5" x2="454" y2="166.5" stroke="#777" stroke-width="1"/>
<line x1="334" y1="167.5" x2="454" y2="167.5" stroke="#aaa" stroke-width="1"/>
<line x1="334.5" y1="167" x2="334.5" y2="403.5" stroke="#aaa" stroke-width="1"/>
<line x1="453.5" y1="167" x2="453.5" y2="403.5" stroke="#aaa" stroke-width="1"/>
<line x1="334" y1="398.5" x2="454" y2="398.5" stroke="#aaa" stroke-width="1"/>
<text x="329.5" y="173.2" font-size="12.5" fill="#dcdcdc" text-anchor="end">15</text>
<text x="329.5" y="210.9" font-size="12.5" fill="#dcdcdc" text-anchor="end">10</text>
<text x="329.5" y="249.9" font-size="12.5" fill="#dcdcdc" text-anchor="end">5</text>
<text x="329.5" y="288.9" font-size="12.5" fill="#dcdcdc" text-anchor="end">0</text>
<text x="329.5" y="327.9" font-size="12.5" fill="#dcdcdc" text-anchor="end">-5</text>
<text x="329.5" y="365.9" font-size="12.5" fill="#dcdcdc" text-anchor="end">-10</text>
<text x="329.5" y="404.9" font-size="12.5" fill="#dcdcdc" text-anchor="end">-15</text>
<text x="363.6" y="163" font-size="12.5" fill="#dcdcdc" textLength="38.8" lengthAdjust="spacingAndGlyphs">Delta L</text>
<text x="393.8" y="413" font-size="12.5" fill="#dcdcdc" text-anchor="middle">100</text>
<rect x="504" y="167" width="119" height="231" fill="#242424"/>
<line x1="499" y1="167.5" x2="504" y2="167.5" stroke="#d0d0d0" stroke-width="1"/>
<line x1="504" y1="206.5" x2="623" y2="206.5" stroke="#9a9a9a" stroke-width="1"/>
<line x1="499" y1="206.5" x2="504" y2="206.5" stroke="#d0d0d0" stroke-width="1"/>
<line x1="504" y1="245.5" x2="623" y2="245.5" stroke="#9a9a9a" stroke-width="1"/>
<line x1="499" y1="245.5" x2="504" y2="245.5" stroke="#d0d0d0" stroke-width="1"/>
<line x1="504" y1="284.5" x2="623" y2="284.5" stroke="#9a9a9a" stroke-width="1"/>
<line x1="499" y1="284.5" x2="504" y2="284.5" stroke="#d0d0d0" stroke-width="1"/>
<line x1="504" y1="323.5" x2="623" y2="323.5" stroke="#9a9a9a" stroke-width="1"/>
<line x1="499" y1="323.5" x2="504" y2="323.5" stroke="#d0d0d0" stroke-width="1"/>
<line x1="504" y1="361.5" x2="623" y2="361.5" stroke="#9a9a9a" stroke-width="1"/>
<line x1="499" y1="361.5" x2="504" y2="361.5" stroke="#d0d0d0" stroke-width="1"/>
<line x1="499" y1="398.5" x2="504" y2="398.5" stroke="#d0d0d0" stroke-width="1"/>
<line x1="504" y1="166.5" x2="624" y2="166.5" stroke="#777" stroke-width="1"/>
<line x1="504" y1="167.5" x2="624" y2="167.5" stroke="#aaa" stroke-width="1"/>
<line x1="504.5" y1="167" x2="504.5" y2="403.5" stroke="#aaa" stroke-width="1"/>
<line x1="623.5" y1="167" x2="623.5" y2="403.5" stroke="#aaa" stroke-width="1"/>
<rect x="516" y="256" width="95" height="28" fill="#000"/>
<rect x="517" y="257" width="93" height="27" fill="url(#gW)"/>
<line x1="504" y1="398.5" x2="624" y2="398.5" stroke="#aaa" stroke-width="1"/>
<text x="499.5" y="173.2" font-size="12.5" fill="#dcdcdc" text-anchor="end">15</text>
<text x="499.5" y="210.9" font-size="12.5" fill="#dcdcdc" text-anchor="end">10</text>
<text x="499.5" y="249.9" font-size="12.5" fill="#dcdcdc" text-anchor="end">5</text>
<text x="499.5" y="288.9" font-size="12.5" fill="#dcdcdc" text-anchor="end">0</text>
<text x="499.5" y="327.9" font-size="12.5" fill="#dcdcdc" text-anchor="end">-5</text>
<text x="499.5" y="365.9" font-size="12.5" fill="#dcdcdc" text-anchor="end">-10</text>
<text x="499.5" y="404.9" font-size="12.5" fill="#dcdcdc" text-anchor="end">-15</text>
<text x="533.6" y="163" font-size="12.5" fill="#dcdcdc" textLength="38.8" lengthAdjust="spacingAndGlyphs">Delta C</text>
<text x="563.8" y="413" font-size="12.5" fill="#dcdcdc" text-anchor="middle">100</text>
<rect x="675" y="167" width="119" height="231" fill="#242424"/>
<line x1="670" y1="167.5" x2="675" y2="167.5" stroke="#d0d0d0" stroke-width="1"/>
<line x1="675" y1="206.5" x2="794" y2="206.5" stroke="#9a9a9a" stroke-width="1"/>
<line x1="670" y1="206.5" x2="675" y2="206.5" stroke="#d0d0d0" stroke-width="1"/>
<line x1="675" y1="245.5" x2="794" y2="245.5" stroke="#9a9a9a" stroke-width="1"/>
<line x1="670" y1="245.5" x2="675" y2="245.5" stroke="#d0d0d0" stroke-width="1"/>
<line x1="675" y1="284.5" x2="794" y2="284.5" stroke="#9a9a9a" stroke-width="1"/>
<line x1="670" y1="284.5" x2="675" y2="284.5" stroke="#d0d0d0" stroke-width="1"/>
<line x1="675" y1="323.5" x2="794" y2="323.5" stroke="#9a9a9a" stroke-width="1"/>
<line x1="670" y1="323.5" x2="675" y2="323.5" stroke="#d0d0d0" stroke-width="1"/>
<line x1="675" y1="361.5" x2="794" y2="361.5" stroke="#9a9a9a" stroke-width="1"/>
<line x1="670" y1="361.5" x2="675" y2="361.5" stroke="#d0d0d0" stroke-width="1"/>
<line x1="670" y1="398.5" x2="675" y2="398.5" stroke="#d0d0d0" stroke-width="1"/>
<line x1="675" y1="166.5" x2="795" y2="166.5" stroke="#777" stroke-width="1"/>
<line x1="675" y1="167.5" x2="795" y2="167.5" stroke="#aaa" stroke-width="1"/>
<line x1="675.5" y1="167" x2="675.5" y2="403.5" stroke="#aaa" stroke-width="1"/>
<line x1="794.5" y1="167" x2="794.5" y2="403.5" stroke="#aaa" stroke-width="1"/>
<line x1="675" y1="398.5" x2="795" y2="398.5" stroke="#aaa" stroke-width="1"/>
<text x="670.5" y="173.2" font-size="12.5" fill="#dcdcdc" text-anchor="end">15</text>
<text x="670.5" y="210.9" font-size="12.5" fill="#dcdcdc" text-anchor="end">10</text>
<text x="670.5" y="249.9" font-size="12.5" fill="#dcdcdc" text-anchor="end">5</text>
<text x="670.5" y="288.9" font-size="12.5" fill="#dcdcdc" text-anchor="end">0</text>
<text x="670.5" y="327.9" font-size="12.5" fill="#dcdcdc" text-anchor="end">-5</text>
<text x="670.5" y="365.9" font-size="12.5" fill="#dcdcdc" text-anchor="end">-10</text>
<text x="670.5" y="404.9" font-size="12.5" fill="#dcdcdc" text-anchor="end">-15</text>
<text x="704.6" y="163" font-size="12.5" fill="#dcdcdc" textLength="38.8" lengthAdjust="spacingAndGlyphs">Delta H</text>
<text x="734.8" y="413" font-size="12.5" fill="#dcdcdc" text-anchor="middle">100</text>
<rect x="301" y="490" width="522" height="214" fill="#242424"/>
<line x1="301" y1="562.5" x2="823" y2="562.5" stroke="#9a9a9a" stroke-width="1"/>
<line x1="301" y1="633.5" x2="823" y2="633.5" stroke="#9a9a9a" stroke-width="1"/>
<line x1="296.4" y1="490.5" x2="301" y2="490.5" stroke="#d0d0d0" stroke-width="1"/>
<line x1="296.4" y1="562.5" x2="301" y2="562.5" stroke="#d0d0d0" stroke-width="1"/>
<line x1="296.4" y1="633.5" x2="301" y2="633.5" stroke="#d0d0d0" stroke-width="1"/>
<line x1="296.4" y1="704.5" x2="301" y2="704.5" stroke="#d0d0d0" stroke-width="1"/>
<line x1="301" y1="490.5" x2="824" y2="490.5" stroke="#aaa" stroke-width="1"/>
<line x1="301.5" y1="490" x2="301.5" y2="709" stroke="#aaa" stroke-width="1"/>
<line x1="823.5" y1="490" x2="823.5" y2="709" stroke="#aaa" stroke-width="1"/>
<line x1="387.5" y1="704" x2="387.5" y2="709" stroke="#ccc" stroke-width="1"/>
<line x1="474.5" y1="704" x2="474.5" y2="709" stroke="#ccc" stroke-width="1"/>
<line x1="561.5" y1="704" x2="561.5" y2="709" stroke="#ccc" stroke-width="1"/>
<line x1="648.5" y1="704" x2="648.5" y2="709" stroke="#ccc" stroke-width="1"/>
<line x1="735.5" y1="704" x2="735.5" y2="709" stroke="#ccc" stroke-width="1"/>
<defs>
<linearGradient id="b0" x1="0" y1="0" x2="0" y2="1"><stop offset="0" stop-color="#ffffff"/><stop offset="0.05" stop-color="#ffffff"/><stop offset="1" stop-color="#606060"/></linearGradient>
<linearGradient id="b1" x1="0" y1="0" x2="0" y2="1"><stop offset="0" stop-color="#c3a6a5"/><stop offset="0.08" stop-color="#96807f"/><stop offset="1" stop-color="#574a49"/></linearGradient>
<linearGradient id="b2" x1="0" y1="0" x2="0" y2="1"><stop offset="0" stop-color="#a6b39c"/><stop offset="0.21" stop-color="#808a78"/><stop offset="1" stop-color="#4a5045"/></linearGradient>
<linearGradient id="b3" x1="0" y1="0" x2="0" y2="1"><stop offset="0" stop-color="#a9a1c5"/><stop offset="0.19" stop-color="#827c98"/><stop offset="1" stop-color="#4b4758"/></linearGradient>
<linearGradient id="b4" x1="0" y1="0" x2="0" y2="1"><stop offset="0" stop-color="#a2b3b0"/><stop offset="0.16" stop-color="#7d8a88"/><stop offset="1" stop-color="#48504e"/></linearGradient>
<linearGradient id="b5" x1="0" y1="0" x2="0" y2="1"><stop offset="0" stop-color="#b3a3c0"/><stop offset="0.11" stop-color="#8a7e94"/><stop offset="1" stop-color="#504955"/></linearGradient>
<linearGradient id="b6" x1="0" y1="0" x2="0" y2="1"><stop offset="0" stop-color="#b8bb9e"/><stop offset="0.09" stop-color="#8e907a"/><stop offset="1" stop-color="#525346"/></linearGradient>
<linearGradient id="b7" x1="0" y1="0" x2="0" y2="1"><stop offset="0" stop-color="#d3a19c"/><stop offset="0.12" stop-color="#a37c78"/><stop offset="1" stop-color="#5e4745"/></linearGradient>
<linearGradient id="b8" x1="0" y1="0" x2="0" y2="1"><stop offset="0" stop-color="#a1c091"/><stop offset="0.35" stop-color="#7c9470"/><stop offset="1" stop-color="#475540"/></linearGradient>
<linearGradient id="b9" x1="0" y1="0" x2="0" y2="1"><stop offset="0" stop-color="#a399d0"/><stop offset="0.31" stop-color="#7e76a0"/><stop offset="1" stop-color="#49445c"/></linearGradient>
<linearGradient id="b10" x1="0" y1="0" x2="0" y2="1"><stop offset="0" stop-color="#9ebbbb"/><stop offset="0.31" stop-color="#7a9090"/><stop offset="1" stop-color="#465353"/></linearGradient>
<linearGradient id="b11" x1="0" y1="0" x2="0" y2="1"><stop offset="0" stop-color="#bd9eca"/><stop offset="0.16" stop-color="#927a9c"/><stop offset="1" stop-color="#54465a"/></linearGradient>
<linearGradient id="b12" x1="0" y1="0" x2="0" y2="1"><stop offset="0" stop-color="#c0c38f"/><stop offset="0.14" stop-color="#94966e"/><stop offset="1" stop-color="#55573f"/></linearGradient>
<linearGradient id="b13" x1="0" y1="0" x2="0" y2="1"><stop offset="0" stop-color="#ec9994"/><stop offset="0.16" stop-color="#b67672"/><stop offset="1" stop-color="#694442"/></linearGradient>
<linearGradient id="b14" x1="0" y1="0" x2="0" y2="1"><stop offset="0" stop-color="#a1ca84"/><stop offset="0.50" stop-color="#7c9c66"/><stop offset="1" stop-color="#475a3b"/></linearGradient>
<linearGradient id="b15" x1="0" y1="0" x2="0" y2="1"><stop offset="0" stop-color="#a191e7"/><stop offset="0.21" stop-color="#7c70b2"/><stop offset="1" stop-color="#474067"/></linearGradient>
<linearGradient id="b16" x1="0" y1="0" x2="0" y2="1"><stop offset="0" stop-color="#9ec8ca"/><stop offset="0.50" stop-color="#7a9a9c"/><stop offset="1" stop-color="#46595a"/></linearGradient>
<linearGradient id="b17" x1="0" y1="0" x2="0" y2="1"><stop offset="0" stop-color="#d299e2"/><stop offset="0.18" stop-color="#a276ae"/><stop offset="1" stop-color="#5d4464"/></linearGradient>
<linearGradient id="b18" x1="0" y1="0" x2="0" y2="1"><stop offset="0" stop-color="#caca82"/><stop offset="0.10" stop-color="#9c9c64"/><stop offset="1" stop-color="#5a5a39"/></linearGradient>
<linearGradient id="b19" x1="0" y1="0" x2="0" y2="1"><stop offset="0" stop-color="#fe8f7f"/><stop offset="0.14" stop-color="#c46e62"/><stop offset="1" stop-color="#713f38"/></linearGradient>
<linearGradient id="b20" x1="0" y1="0" x2="0" y2="1"><stop offset="0" stop-color="#94d072"/><stop offset="0.41" stop-color="#72a058"/><stop offset="1" stop-color="#425c33"/></linearGradient>
<linearGradient id="b21" x1="0" y1="0" x2="0" y2="1"><stop offset="0" stop-color="#9c84ec"/><stop offset="0.36" stop-color="#7866b6"/><stop offset="1" stop-color="#453b69"/></linearGradient>
<linearGradient id="b22" x1="0" y1="0" x2="0" y2="1"><stop offset="0" stop-color="#96d0d7"/><stop offset="0.36" stop-color="#74a0a6"/><stop offset="1" stop-color="#435c60"/></linearGradient>
<linearGradient id="b23" x1="0" y1="0" x2="0" y2="1"><stop offset="0" stop-color="#e48cea"/><stop offset="0.18" stop-color="#b06cb4"/><stop offset="1" stop-color="#663e68"/></linearGradient>
<linearGradient id="b24" x1="0" y1="0" x2="0" y2="1"><stop offset="0" stop-color="#d7d76f"/><stop offset="0.14" stop-color="#a6a656"/><stop offset="1" stop-color="#606031"/></linearGradient>
<linearGradient id="b25" x1="0" y1="0" x2="0" y2="1"><stop offset="0" stop-color="#ff9127"/><stop offset="0.50" stop-color="#c8701e"/><stop offset="1" stop-color="#734011"/></linearGradient>
<linearGradient id="b26" x1="0" y1="0" x2="0" y2="1"><stop offset="0" stop-color="#a3d250"/><stop offset="0.28" stop-color="#7ea23e"/><stop offset="1" stop-color="#495d23"/></linearGradient>
<linearGradient id="b27" x1="0" y1="0" x2="0" y2="1"><stop offset="0" stop-color="#845ddf"/><stop offset="0.05" stop-color="#6648ac"/><stop offset="1" stop-color="#3b2963"/></linearGradient>
<linearGradient id="b28" x1="0" y1="0" x2="0" y2="1"><stop offset="0" stop-color="#9ed2df"/><stop offset="0.17" stop-color="#7aa2ac"/><stop offset="1" stop-color="#465d63"/></linearGradient>
<linearGradient id="b29" x1="0" y1="0" x2="0" y2="1"><stop offset="0" stop-color="#ef77f1"/><stop offset="0.21" stop-color="#b85cba"/><stop offset="1" stop-color="#6a356b"/></linearGradient>
<linearGradient id="b30" x1="0" y1="0" x2="0" y2="1"><stop offset="0" stop-color="#dada41"/><stop offset="0.18" stop-color="#a8a832"/><stop offset="1" stop-color="#61611c"/></linearGradient>
</defs>
<rect x="365" y="651.3" width="9" height="52.7" fill="#000"/>
<rect x="366" y="652.5" width="7" height="51.5" fill="url(#b0)"/>
<rect x="397" y="671.5" width="9" height="32.5" fill="#000"/>
<rect x="398" y="672.8" width="7" height="31.2" fill="url(#b1)"/>
<rect x="406.2" y="690.7" width="9" height="13.3" fill="#000"/>
<rect x="407.2" y="691.9" width="7" height="12.1" fill="url(#b2)"/>
<rect x="416" y="689.4" width="9" height="14.6" fill="#000"/>
<rect x="417" y="690.6" width="7" height="13.4" fill="url(#b3)"/>
<rect x="425.2" y="687.5" width="9" height="16.4" fill="#000"/>
<rect x="426.2" y="688.8" width="7" height="15.2" fill="url(#b4)"/>
<rect x="434.8" y="680.4" width="9" height="23.6" fill="#000"/>
<rect x="435.8" y="681.6" width="7" height="22.4" fill="url(#b5)"/>
<rect x="444" y="673.5" width="9" height="30.4" fill="#000"/>
<rect x="445" y="674.8" width="7" height="29.2" fill="url(#b6)"/>
<rect x="484" y="682.5" width="9" height="21.4" fill="#000"/>
<rect x="485" y="683.8" width="7" height="20.2" fill="url(#b7)"/>
<rect x="493" y="695.7" width="9" height="8.3" fill="#000"/>
<rect x="494" y="696.9" width="7" height="7.1" fill="url(#b8)"/>
<rect x="503" y="694.7" width="9" height="9.3" fill="#000"/>
<rect x="504" y="695.9" width="7" height="8.1" fill="url(#b9)"/>
<rect x="512" y="694.7" width="9" height="9.3" fill="#000"/>
<rect x="513" y="695.9" width="7" height="8.1" fill="url(#b10)"/>
<rect x="521" y="687.5" width="9" height="16.4" fill="#000"/>
<rect x="522" y="688.8" width="7" height="15.2" fill="url(#b11)"/>
<rect x="531" y="684.7" width="9" height="19.3" fill="#000"/>
<rect x="532" y="685.9" width="7" height="18.1" fill="url(#b12)"/>
<rect x="571" y="686.7" width="9" height="17.3" fill="#000"/>
<rect x="572" y="687.9" width="7" height="16.1" fill="url(#b13)"/>
<rect x="580.2" y="698.8" width="9" height="5.2" fill="#000"/>
<rect x="581.2" y="700" width="7" height="4" fill="url(#b14)"/>
<rect x="589.6" y="690.9" width="9" height="13.1" fill="#000"/>
<rect x="590.6" y="692.1" width="7" height="11.9" fill="url(#b15)"/>
<rect x="599.2" y="697.8" width="9" height="6.2" fill="#000"/>
<rect x="600.2" y="699" width="7" height="5" fill="url(#b16)"/>
<rect x="608.2" y="688.8" width="9" height="15.2" fill="#000"/>
<rect x="609.2" y="690" width="7" height="14" fill="url(#b17)"/>
<rect x="618" y="678.8" width="9" height="25.2" fill="#000"/>
<rect x="619" y="680" width="7" height="24" fill="url(#b18)"/>
<rect x="657.8" y="684.8" width="9" height="19.2" fill="#000"/>
<rect x="658.8" y="686" width="7" height="18" fill="url(#b19)"/>
<rect x="667" y="696.7" width="9" height="7.3" fill="#000"/>
<rect x="668" y="697.9" width="7" height="6.1" fill="url(#b20)"/>
<rect x="676.2" y="695.9" width="9" height="8.1" fill="#000"/>
<rect x="677.2" y="697.1" width="7" height="6.9" fill="url(#b21)"/>
<rect x="686" y="695.9" width="9" height="8.1" fill="#000"/>
<rect x="687" y="697.1" width="7" height="6.9" fill="url(#b22)"/>
<rect x="695.2" y="688.8" width="9" height="15.2" fill="#000"/>
<rect x="696.2" y="690" width="7" height="14" fill="url(#b23)"/>
<rect x="705" y="684.8" width="9" height="19.2" fill="#000"/>
<rect x="706" y="686" width="7" height="18" fill="url(#b24)"/>
<rect x="744.2" y="698.2" width="9" height="5.8" fill="#000"/>
<rect x="745.2" y="699.4" width="7" height="4.6" fill="url(#b25)"/>
<rect x="754" y="693.8" width="9" height="10.2" fill="#000"/>
<rect x="755" y="695" width="7" height="9" fill="url(#b26)"/>
<rect x="763.4" y="653.5" width="9" height="50.5" fill="#000"/>
<rect x="764.4" y="654.8" width="7" height="49.2" fill="url(#b27)"/>
<rect x="773" y="687.9" width="9" height="16.1" fill="#000"/>
<rect x="774" y="689.1" width="7" height="14.9" fill="url(#b28)"/>
<rect x="782" y="690.7" width="9" height="13.3" fill="#000"/>
<rect x="783" y="691.9" width="7" height="12.1" fill="url(#b29)"/>
<rect x="791.4" y="688.8" width="9" height="15.2" fill="#000"/>
<rect x="792.4" y="690" width="7" height="14" fill="url(#b30)"/>
<line x1="301" y1="704.5" x2="824" y2="704.5" stroke="#aaa" stroke-width="1"/>
<text x="296" y="494.9" font-size="12.5" fill="#dcdcdc" text-anchor="end">15</text>
<text x="296" y="566.9" font-size="12.5" fill="#dcdcdc" text-anchor="end">10</text>
<text x="296" y="637.9" font-size="12.5" fill="#dcdcdc" text-anchor="end">5</text>
<text x="296" y="708.9" font-size="12.5" fill="#dcdcdc" text-anchor="end">0</text>
<text x="344.2" y="718.3" font-size="12.5" fill="#dcdcdc" text-anchor="middle">100</text>
<text x="431.3" y="718.3" font-size="12.5" fill="#dcdcdc" text-anchor="middle">20%</text>
<text x="518" y="718.3" font-size="12.5" fill="#dcdcdc" text-anchor="middle">40%</text>
<text x="606" y="718.3" font-size="12.5" fill="#dcdcdc" text-anchor="middle">60%</text>
<text x="692.8" y="718.3" font-size="12.5" fill="#dcdcdc" text-anchor="middle">80%</text>
<text x="780" y="718.3" font-size="12.5" fill="#dcdcdc" text-anchor="middle">100%</text>
<text x="518" y="485" font-size="12.5" fill="#dcdcdc" textLength="69.0" lengthAdjust="spacingAndGlyphs">DeltaE 2000</text>
<text x="373" y="488" font-size="12.5" fill="#f0f0f0" textLength="53.5" lengthAdjust="spacingAndGlyphs" stroke="#f0f0f0" stroke-width=".45">Avg: 1,22</text>
<text x="694.5" y="487.5" font-size="12.5" fill="#f0f0f0" textLength="56.8" lengthAdjust="spacingAndGlyphs" stroke="#f0f0f0" stroke-width=".45">Max: 3,61</text>
<text x="12" y="71.6" font-size="30.5" fill="#f4f4f4" textLength="497.6" lengthAdjust="spacingAndGlyphs">P3 Saturation Sweeps inside BT.2020</text>
<text x="12.2" y="565.4" font-size="23.3" fill="#f4f4f4" textLength="190.5" lengthAdjust="spacingAndGlyphs">Current Reading</text>
<text x="13.6" y="603" font-size="19.8" fill="#f4f4f4" textLength="88.0" lengthAdjust="spacingAndGlyphs">x: 0,3054</text>
<text x="13.6" y="637.8" font-size="19.8" fill="#f4f4f4" textLength="88.0" lengthAdjust="spacingAndGlyphs">y: 0,3244</text>
<text x="13.6" y="672.8" font-size="19.8" fill="#f4f4f4" textLength="107.0" lengthAdjust="spacingAndGlyphs">fL: 842,799</text>
<text x="13.6" y="707.7" font-size="19.8" fill="#f4f4f4" textLength="160.4" lengthAdjust="spacingAndGlyphs">cd/m²: 2887,647</text>
<text x="606.2" y="456.7" font-size="19.5" fill="#f4f4f4" textLength="93.0" lengthAdjust="spacingAndGlyphs">dE Formula:</text>
<rect x="706" y="440" width="116" height="22" fill="url(#gCombo)"/>
<text x="710.3" y="457.5" font-size="14" fill="#f4f4f4" textLength="29.7" lengthAdjust="spacingAndGlyphs">2000</text>
<path d="M809 449.2h8l-4 4.6z" fill="#000"/>
<line x1="878" y1="59.5" x2="1431" y2="59.5" stroke="#b4b4b4" stroke-width="1"/>
<line x1="878.5" y1="59" x2="878.5" y2="497" stroke="#b4b4b4" stroke-width="1"/>
<line x1="1430.5" y1="59" x2="1430.5" y2="497" stroke="#b4b4b4" stroke-width="1"/>
<line x1="878" y1="496.5" x2="1431" y2="496.5" stroke="#b4b4b4" stroke-width="1"/>
<line x1="873" y1="496.5" x2="878" y2="496.5" stroke="#d0d0d0" stroke-width="1"/>
<text x="873.3" y="501" font-size="12.5" fill="#dcdcdc" text-anchor="end">0</text>
<line x1="878.5" y1="497" x2="878.5" y2="502.5" stroke="#d0d0d0" stroke-width="1"/>
<text x="878.5" y="514.8" font-size="12.5" fill="#dcdcdc" text-anchor="middle">0</text>
<line x1="873" y1="461.5" x2="878" y2="461.5" stroke="#d0d0d0" stroke-width="1"/>
<text x="873.3" y="466" font-size="12.5" fill="#dcdcdc" text-anchor="end">0,05</text>
<line x1="924.5" y1="497" x2="924.5" y2="502.5" stroke="#d0d0d0" stroke-width="1"/>
<text x="924.5" y="514.8" font-size="12.5" fill="#dcdcdc" text-anchor="middle">0,05</text>
<line x1="873" y1="424.5" x2="878" y2="424.5" stroke="#d0d0d0" stroke-width="1"/>
<text x="873.3" y="429" font-size="12.5" fill="#dcdcdc" text-anchor="end">0,1</text>
<line x1="970.5" y1="497" x2="970.5" y2="502.5" stroke="#d0d0d0" stroke-width="1"/>
<text x="970.5" y="514.8" font-size="12.5" fill="#dcdcdc" text-anchor="middle">0,1</text>
<line x1="873" y1="388.5" x2="878" y2="388.5" stroke="#d0d0d0" stroke-width="1"/>
<text x="873.3" y="393" font-size="12.5" fill="#dcdcdc" text-anchor="end">0,15</text>
<line x1="1016.5" y1="497" x2="1016.5" y2="502.5" stroke="#d0d0d0" stroke-width="1"/>
<text x="1016.5" y="514.8" font-size="12.5" fill="#dcdcdc" text-anchor="middle">0,15</text>
<line x1="873" y1="352.5" x2="878" y2="352.5" stroke="#d0d0d0" stroke-width="1"/>
<text x="873.3" y="357" font-size="12.5" fill="#dcdcdc" text-anchor="end">0,2</text>
<line x1="1062.5" y1="497" x2="1062.5" y2="502.5" stroke="#d0d0d0" stroke-width="1"/>
<text x="1062.5" y="514.8" font-size="12.5" fill="#dcdcdc" text-anchor="middle">0,2</text>
<line x1="873" y1="315.5" x2="878" y2="315.5" stroke="#d0d0d0" stroke-width="1"/>
<text x="873.3" y="320" font-size="12.5" fill="#dcdcdc" text-anchor="end">0,25</text>
<line x1="1108.5" y1="497" x2="1108.5" y2="502.5" stroke="#d0d0d0" stroke-width="1"/>
<text x="1108.5" y="514.8" font-size="12.5" fill="#dcdcdc" text-anchor="middle">0,25</text>
<line x1="873" y1="279.5" x2="878" y2="279.5" stroke="#d0d0d0" stroke-width="1"/>
<text x="873.3" y="284" font-size="12.5" fill="#dcdcdc" text-anchor="end">0,3</text>
<line x1="1154.5" y1="497" x2="1154.5" y2="502.5" stroke="#d0d0d0" stroke-width="1"/>
<text x="1154.5" y="514.8" font-size="12.5" fill="#dcdcdc" text-anchor="middle">0,3</text>
<line x1="873" y1="242.5" x2="878" y2="242.5" stroke="#d0d0d0" stroke-width="1"/>
<text x="873.3" y="247" font-size="12.5" fill="#dcdcdc" text-anchor="end">0,35</text>
<line x1="1200.5" y1="497" x2="1200.5" y2="502.5" stroke="#d0d0d0" stroke-width="1"/>
<text x="1200.5" y="514.8" font-size="12.5" fill="#dcdcdc" text-anchor="middle">0,35</text>
<line x1="873" y1="206.5" x2="878" y2="206.5" stroke="#d0d0d0" stroke-width="1"/>
<text x="873.3" y="211" font-size="12.5" fill="#dcdcdc" text-anchor="end">0,4</text>
<line x1="1245.5" y1="497" x2="1245.5" y2="502.5" stroke="#d0d0d0" stroke-width="1"/>
<text x="1245.5" y="514.8" font-size="12.5" fill="#dcdcdc" text-anchor="middle">0,4</text>
<line x1="873" y1="170.5" x2="878" y2="170.5" stroke="#d0d0d0" stroke-width="1"/>
<text x="873.3" y="175" font-size="12.5" fill="#dcdcdc" text-anchor="end">0,45</text>
<line x1="1291.5" y1="497" x2="1291.5" y2="502.5" stroke="#d0d0d0" stroke-width="1"/>
<text x="1291.5" y="514.8" font-size="12.5" fill="#dcdcdc" text-anchor="middle">0,45</text>
<line x1="873" y1="133.5" x2="878" y2="133.5" stroke="#d0d0d0" stroke-width="1"/>
<text x="873.3" y="138" font-size="12.5" fill="#dcdcdc" text-anchor="end">0,5</text>
<line x1="1337.5" y1="497" x2="1337.5" y2="502.5" stroke="#d0d0d0" stroke-width="1"/>
<text x="1337.5" y="514.8" font-size="12.5" fill="#dcdcdc" text-anchor="middle">0,5</text>
<line x1="873" y1="97.5" x2="878" y2="97.5" stroke="#d0d0d0" stroke-width="1"/>
<text x="873.3" y="102" font-size="12.5" fill="#dcdcdc" text-anchor="end">0,55</text>
<line x1="1383.5" y1="497" x2="1383.5" y2="502.5" stroke="#d0d0d0" stroke-width="1"/>
<text x="1383.5" y="514.8" font-size="12.5" fill="#dcdcdc" text-anchor="middle">0,55</text>
<text x="1103.5" y="56" font-size="12.5" fill="#dcdcdc" textLength="72.0" lengthAdjust="spacingAndGlyphs">CIE 1976 u'v'</text>
<rect x="962.5" y="69.5" width="12" height="12" fill="none" stroke="#fff" stroke-width="1"/>
<rect x="973.5" y="79.5" width="12" height="12" fill="none" stroke="#fff" stroke-width="1"/>
<rect x="989.5" y="92.5" width="12" height="12" fill="none" stroke="#fff" stroke-width="1"/>
<rect x="1006.5" y="108.5" width="12" height="12" fill="none" stroke="#fff" stroke-width="1"/>
<rect x="1028.5" y="125.5" width="12" height="12" fill="none" stroke="#fff" stroke-width="1"/>
<circle cx="973.1" cy="77.9" r="3.55" fill="#7e8650" stroke="#0c0c0c" stroke-width="1.1"/>
<circle cx="981.9" cy="86.9" r="3.55" fill="#7e8654" stroke="#0c0c0c" stroke-width="1.1"/>
<circle cx="995" cy="99.8" r="3.55" fill="#7c8658" stroke="#0c0c0c" stroke-width="1.1"/>
<circle cx="1011.5" cy="115" r="3.55" fill="#7c8660" stroke="#0c0c0c" stroke-width="1.1"/>
<circle cx="1031" cy="132.9" r="3.55" fill="#7e8470" stroke="#0c0c0c" stroke-width="1.1"/>
<rect x="1059.5" y="79.5" width="12" height="12" fill="none" stroke="#fff" stroke-width="1"/>
<rect x="1058.5" y="90.5" width="12" height="12" fill="none" stroke="#fff" stroke-width="1"/>
<rect x="1057.5" y="102.5" width="12" height="12" fill="none" stroke="#fff" stroke-width="1"/>
<rect x="1054.5" y="116.5" width="12" height="12" fill="none" stroke="#fff" stroke-width="1"/>
<rect x="1057.5" y="131.5" width="12" height="12" fill="none" stroke="#fff" stroke-width="1"/>
<circle cx="1061.9" cy="87.8" r="3.55" fill="#8a8648" stroke="#0c0c0c" stroke-width="1.1"/>
<circle cx="1057.9" cy="95" r="3.55" fill="#8a864c" stroke="#0c0c0c" stroke-width="1.1"/>
<circle cx="1056" cy="107.9" r="3.55" fill="#888654" stroke="#0c0c0c" stroke-width="1.1"/>
<circle cx="1056.9" cy="123.4" r="3.55" fill="#86845e" stroke="#0c0c0c" stroke-width="1.1"/>
<circle cx="1056" cy="137.5" r="3.55" fill="#84826e" stroke="#0c0c0c" stroke-width="1.1"/>
<rect x="1040.5" y="150.5" width="12" height="12" fill="none" stroke="#fff" stroke-width="1"/>
<rect x="1025.5" y="152.5" width="12" height="12" fill="none" stroke="#fff" stroke-width="1"/>
<rect x="1011.5" y="156.5" width="12" height="12" fill="none" stroke="#fff" stroke-width="1"/>
<rect x="997.5" y="158.5" width="12" height="12" fill="none" stroke="#fff" stroke-width="1"/>
<rect x="983.5" y="159.5" width="12" height="12" fill="none" stroke="#fff" stroke-width="1"/>
<circle cx="1042.9" cy="157.5" r="3.55" fill="#808080" stroke="#0c0c0c" stroke-width="1.1"/>
<circle cx="1029" cy="160" r="3.55" fill="#7e8080" stroke="#0c0c0c" stroke-width="1.1"/>
<circle cx="1016.9" cy="162.9" r="3.55" fill="#7c8080" stroke="#0c0c0c" stroke-width="1.1"/>
<circle cx="1005.5" cy="165.9" r="3.55" fill="#7a8080" stroke="#0c0c0c" stroke-width="1.1"/>
<circle cx="993.8" cy="167.1" r="3.55" fill="#788080" stroke="#0c0c0c" stroke-width="1.1"/>
<rect x="1100.5" y="142.5" width="12" height="12" fill="none" stroke="#fff" stroke-width="1"/>
<rect x="1154.5" y="132.5" width="12" height="12" fill="none" stroke="#fff" stroke-width="1"/>
<rect x="1208.5" y="125.5" width="12" height="12" fill="none" stroke="#fff" stroke-width="1"/>
<rect x="1267.5" y="117.5" width="12" height="12" fill="none" stroke="#fff" stroke-width="1"/>
<rect x="1328.5" y="108.5" width="12" height="12" fill="none" stroke="#fff" stroke-width="1"/>
<circle cx="1101" cy="152.7" r="3.55" fill="#827c7c" stroke="#0c0c0c" stroke-width="1.1"/>
<circle cx="1155" cy="141.9" r="3.55" fill="#857674" stroke="#0c0c0c" stroke-width="1.1"/>
<circle cx="1207.5" cy="133.9" r="3.55" fill="#88706a" stroke="#0c0c0c" stroke-width="1.1"/>
<circle cx="1270" cy="124.9" r="3.55" fill="#8a6458" stroke="#0c0c0c" stroke-width="1.1"/>
<circle cx="1318" cy="118.8" r="3.55" fill="#96601c" stroke="#0c0c0c" stroke-width="1.1"/>
<rect x="1069.5" y="163.5" width="12" height="12" fill="none" stroke="#fff" stroke-width="1"/>
<rect x="1092.5" y="180.5" width="12" height="12" fill="none" stroke="#fff" stroke-width="1"/>
<rect x="1112.5" y="199.5" width="12" height="12" fill="none" stroke="#fff" stroke-width="1"/>
<rect x="1139.5" y="224.5" width="12" height="12" fill="none" stroke="#fff" stroke-width="1"/>
<rect x="1168.5" y="252.5" width="12" height="12" fill="none" stroke="#fff" stroke-width="1"/>
<circle cx="1070" cy="171.3" r="3.55" fill="#807e80" stroke="#0c0c0c" stroke-width="1.1"/>
<circle cx="1093.5" cy="192.9" r="3.55" fill="#827a82" stroke="#0c0c0c" stroke-width="1.1"/>
<circle cx="1112" cy="212.9" r="3.55" fill="#827684" stroke="#0c0c0c" stroke-width="1.1"/>
<circle cx="1139" cy="240" r="3.55" fill="#807088" stroke="#0c0c0c" stroke-width="1.1"/>
<circle cx="1170" cy="267.9" r="3.55" fill="#806c8a" stroke="#0c0c0c" stroke-width="1.1"/>
<rect x="1053.5" y="177.5" width="12" height="12" fill="none" stroke="#fff" stroke-width="1"/>
<rect x="1048.5" y="209.5" width="12" height="12" fill="none" stroke="#fff" stroke-width="1"/>
<rect x="1044.5" y="252.5" width="12" height="12" fill="none" stroke="#fff" stroke-width="1"/>
<rect x="1040.5" y="304.5" width="12" height="12" fill="none" stroke="#fff" stroke-width="1"/>
<rect x="1033.5" y="374.5" width="12" height="12" fill="none" stroke="#fff" stroke-width="1"/>
<circle cx="1056" cy="186.9" r="3.55" fill="#7e7e84" stroke="#0c0c0c" stroke-width="1.1"/>
<circle cx="1054" cy="220" r="3.55" fill="#7a7a8c" stroke="#0c0c0c" stroke-width="1.1"/>
<circle cx="1052.5" cy="264" r="3.55" fill="#726c92" stroke="#0c0c0c" stroke-width="1.1"/>
<circle cx="1051" cy="315.9" r="3.55" fill="#6a6098" stroke="#0c0c0c" stroke-width="1.1"/>
<circle cx="1054" cy="388.8" r="3.55" fill="#62489a" stroke="#0c0c0c" stroke-width="1.1"/>
<rect x="1053.5" y="149.5" width="12" height="12" fill="none" stroke="#000" stroke-width="1.25"/>
<circle cx="1057.1" cy="157.5" r="3.2" fill="#fff" stroke="#000" stroke-width="1"/>
<rect x="1272.5" y="383.5" width="12" height="12" fill="none" stroke="#fff" stroke-width="1"/>
<rect x="1338.6" y="389.5" width="11.8" height="11" fill="none" stroke="#000" stroke-width="1.3"/>
<circle cx="1321" cy="407" r="3.3" fill="#fff" stroke="#000" stroke-width="1.2"/>
<text x="1163" y="484.8" font-size="21.8" fill="#f4f4f4" textLength="252.5" lengthAdjust="spacingAndGlyphs">RGB Triplet: 235, 235, 235</text>
<rect x="840.6" y="532.5" width="274.8" height="176.2" fill="#101010"/>
<rect x="842" y="534" width="272" height="27" fill="url(#gHdr)"/>
<text x="1046.7" y="553.2" font-size="13" fill="#f4f4f4" textLength="29.3" lengthAdjust="spacingAndGlyphs" stroke="#f4f4f4" stroke-width=".4">100</text>
<rect x="842" y="561" width="272" height="24.5" fill="#404040"/>
<text x="857.8" y="578.6" font-size="14.3" fill="#f6f6f6" textLength="73.6" lengthAdjust="spacingAndGlyphs" font-weight="bold">x: CIE31</text>
<text x="1015" y="578.6" font-size="14.3" fill="#f0f0f0" textLength="58.7" lengthAdjust="spacingAndGlyphs">0,3054</text>
<rect x="842" y="585.5" width="272" height="24.5" fill="#808080"/>
<text x="857.8" y="603.1" font-size="14.3" fill="#f6f6f6" textLength="73.6" lengthAdjust="spacingAndGlyphs" font-weight="bold">y: CIE31</text>
<text x="1015" y="603.1" font-size="14.3" fill="#f0f0f0" textLength="58.7" lengthAdjust="spacingAndGlyphs">0,3244</text>
<rect x="842" y="610" width="272" height="24.5" fill="#404040"/>
<text x="857.8" y="627.6" font-size="14.3" fill="#f6f6f6" textLength="11.8" lengthAdjust="spacingAndGlyphs" font-weight="bold">Y</text>
<text x="1015" y="627.6" font-size="14.3" fill="#f0f0f0" textLength="91.6" lengthAdjust="spacingAndGlyphs">2887,6474</text>
<rect x="842" y="634.5" width="272" height="24.5" fill="#808080"/>
<text x="857.8" y="652.1" font-size="14.3" fill="#f6f6f6" textLength="134.2" lengthAdjust="spacingAndGlyphs" font-weight="bold">Target x:CIE31</text>
<text x="1015" y="652.1" font-size="14.3" fill="#f0f0f0" textLength="58.7" lengthAdjust="spacingAndGlyphs">0,3127</text>
<rect x="842" y="659" width="272" height="24.5" fill="#404040"/>
<text x="857.8" y="676.6" font-size="14.3" fill="#f6f6f6" textLength="134.2" lengthAdjust="spacingAndGlyphs" font-weight="bold">Target y:CIE31</text>
<text x="1015" y="676.6" font-size="14.3" fill="#f0f0f0" textLength="58.7" lengthAdjust="spacingAndGlyphs">0,3290</text>
<rect x="842" y="683.5" width="272" height="24" fill="#808080"/>
<text x="857.8" y="701.1" font-size="14.3" fill="#f6f6f6" textLength="78.3" lengthAdjust="spacingAndGlyphs" font-weight="bold">Target Y</text>
<text x="1015" y="701.1" font-size="14.3" fill="#f0f0f0" textLength="91.6" lengthAdjust="spacingAndGlyphs">2887,6474</text>
<path d="M2 808V753a4 4 0 0 1 4-4h36a4 4 0 0 1 4 4v55z" fill="url(#gBtn)"/>
<circle cx="23.4" cy="758" r="7" fill="url(#gCirc)"/>
<path d="M19.4 760.4h8.2l-4.1-4.6z" fill="#333"/>
<rect x="6.4" y="775" width="34.8" height="30" rx="3" fill="#fff"/>
<path d="M52 808V754a5 5 0 0 1 5-5h140a5 5 0 0 1 5 5v54z" fill="url(#gSw)"/>
<rect x="57" y="754" width="140" height="36" rx="3.5" fill="#fff"/>
<text x="126.8" y="805" font-size="11.5" fill="#fff" text-anchor="middle" font-weight="bold">100</text>
<rect x="1116.5" y="749" width="323.5" height="59" fill="#1c1c1c"/>
<path d="M1117 808V753a4 4 0 0 1 4-4h44v59z" fill="url(#gBtn)"/>
<line x1="1117" y1="767.5" x2="1165" y2="767.5" stroke="#2c2c2c" stroke-width="1"/>
<circle cx="1141" cy="757.5" r="7" fill="url(#gCirc)"/>
<path d="M1137 760h8.2l-4.1-4.6z" fill="#333"/>
<rect x="1126.3" y="774.6" width="29.6" height="29" rx="4" fill="#a8a8a8" stroke="#262626" stroke-width="2"/>
<rect x="1127.3" y="789" width="27.6" height="13.6" fill="#999"/>
<rect x="1134.3" y="782.4" width="13.5" height="13.2" fill="#0a0a0a"/>
<rect x="1166" y="749" width="46" height="30" fill="url(#gBtn)"/>
<circle cx="1189" cy="764" r="10" fill="url(#gCirc)"/>
<rect x="1213" y="749" width="44.3" height="30" fill="url(#gBtn)"/>
<circle cx="1235" cy="764" r="10" fill="url(#gCirc)"/>
<rect x="1258.3" y="749" width="43.7" height="30" fill="url(#gBtn)"/>
<circle cx="1280" cy="764" r="10" fill="url(#gCirc)"/>
<rect x="1303" y="749" width="44" height="30" fill="url(#gBtn)"/>
<circle cx="1325" cy="764" r="10" fill="url(#gCirc)"/>
<rect x="1348" y="749" width="44.6" height="30" fill="url(#gBtnD)"/>
<circle cx="1370.4" cy="764" r="10" fill="#2e2e2e"/>
<rect x="1393.6" y="749" width="44.6" height="30" fill="url(#gBtn)"/>
<circle cx="1415.8" cy="764" r="10" fill="url(#gCirc)"/>
<rect x="1184.8" y="759.8" width="8.4" height="8.4" fill="#3a3a3a"/>
<path d="M1231.6 758.6v10.8l8.6-5.4z" fill="#333"/>
<path d="M1277.2 759h-2.4v10h2.4M1282.8 759h2.4v10h-2.4" fill="none" stroke="#262626" stroke-width="2"/><rect x="1277.4" y="762.8" width="2" height="2.2" fill="#262626"/><rect x="1280.6" y="762.8" width="2" height="2.2" fill="#262626"/>
<g transform="translate(1325 764) scale(.84) translate(-1325 -764)"><path d="M1325 764c-1.6-2.4-3-3.2-4.4-3.2a3 3 0 0 0 0 6c1.400 0 2.800-.8 4.400-2.800c1.600-2.400 3-3.200 4.400-3.200a3 3 0 0 1 0 6c-1.400 0-2.800-.8-4.400-2.800z" fill="none" stroke="#2e2e2e" stroke-width="1.9"/></g>
<path d="M1365.600 763a5 5 0 0 1 8.600-2.600M1375.200 765a5 5 0 0 1-8.600 2.600" fill="none" stroke="#1c1c1c" stroke-width="2"/><path d="M1375.800 757.400v4.200h-4.200zM1365 770.600v-4.200h4.200z" fill="#1c1c1c"/>
<rect x="1166" y="780" width="136" height="28" fill="url(#gBtnL)"/>
<rect x="1303" y="780" width="135.2" height="28" fill="url(#gBtnL)"/>
<circle cx="1196.8" cy="795" r="10" fill="url(#gCirc)"/>
<circle cx="1410" cy="795" r="10" fill="url(#gCirc)"/>
<path d="M1196 790.600l-4 4.400l4 4.400M1201 790.600l-4 4.400l4 4.400" fill="none" stroke="#333" stroke-width="1.5"/>
<path d="M1406 790.600l4 4.400l-4 4.400M1411 790.600l4 4.400l-4 4.400" fill="none" stroke="#333" stroke-width="1.5"/>
<text x="1224" y="802.6" font-size="22.4" fill="#363636" textLength="50.0" lengthAdjust="spacingAndGlyphs" stroke="#363636" stroke-width=".5">Back</text>
<text x="1330.8" y="802.6" font-size="22.4" fill="#363636" textLength="50.8" lengthAdjust="spacingAndGlyphs" stroke="#363636" stroke-width=".5">Next</text>
<rect x="1438.2" y="749" width="1.8" height="59" fill="#0c0c0c"/>
</svg></body></html>
